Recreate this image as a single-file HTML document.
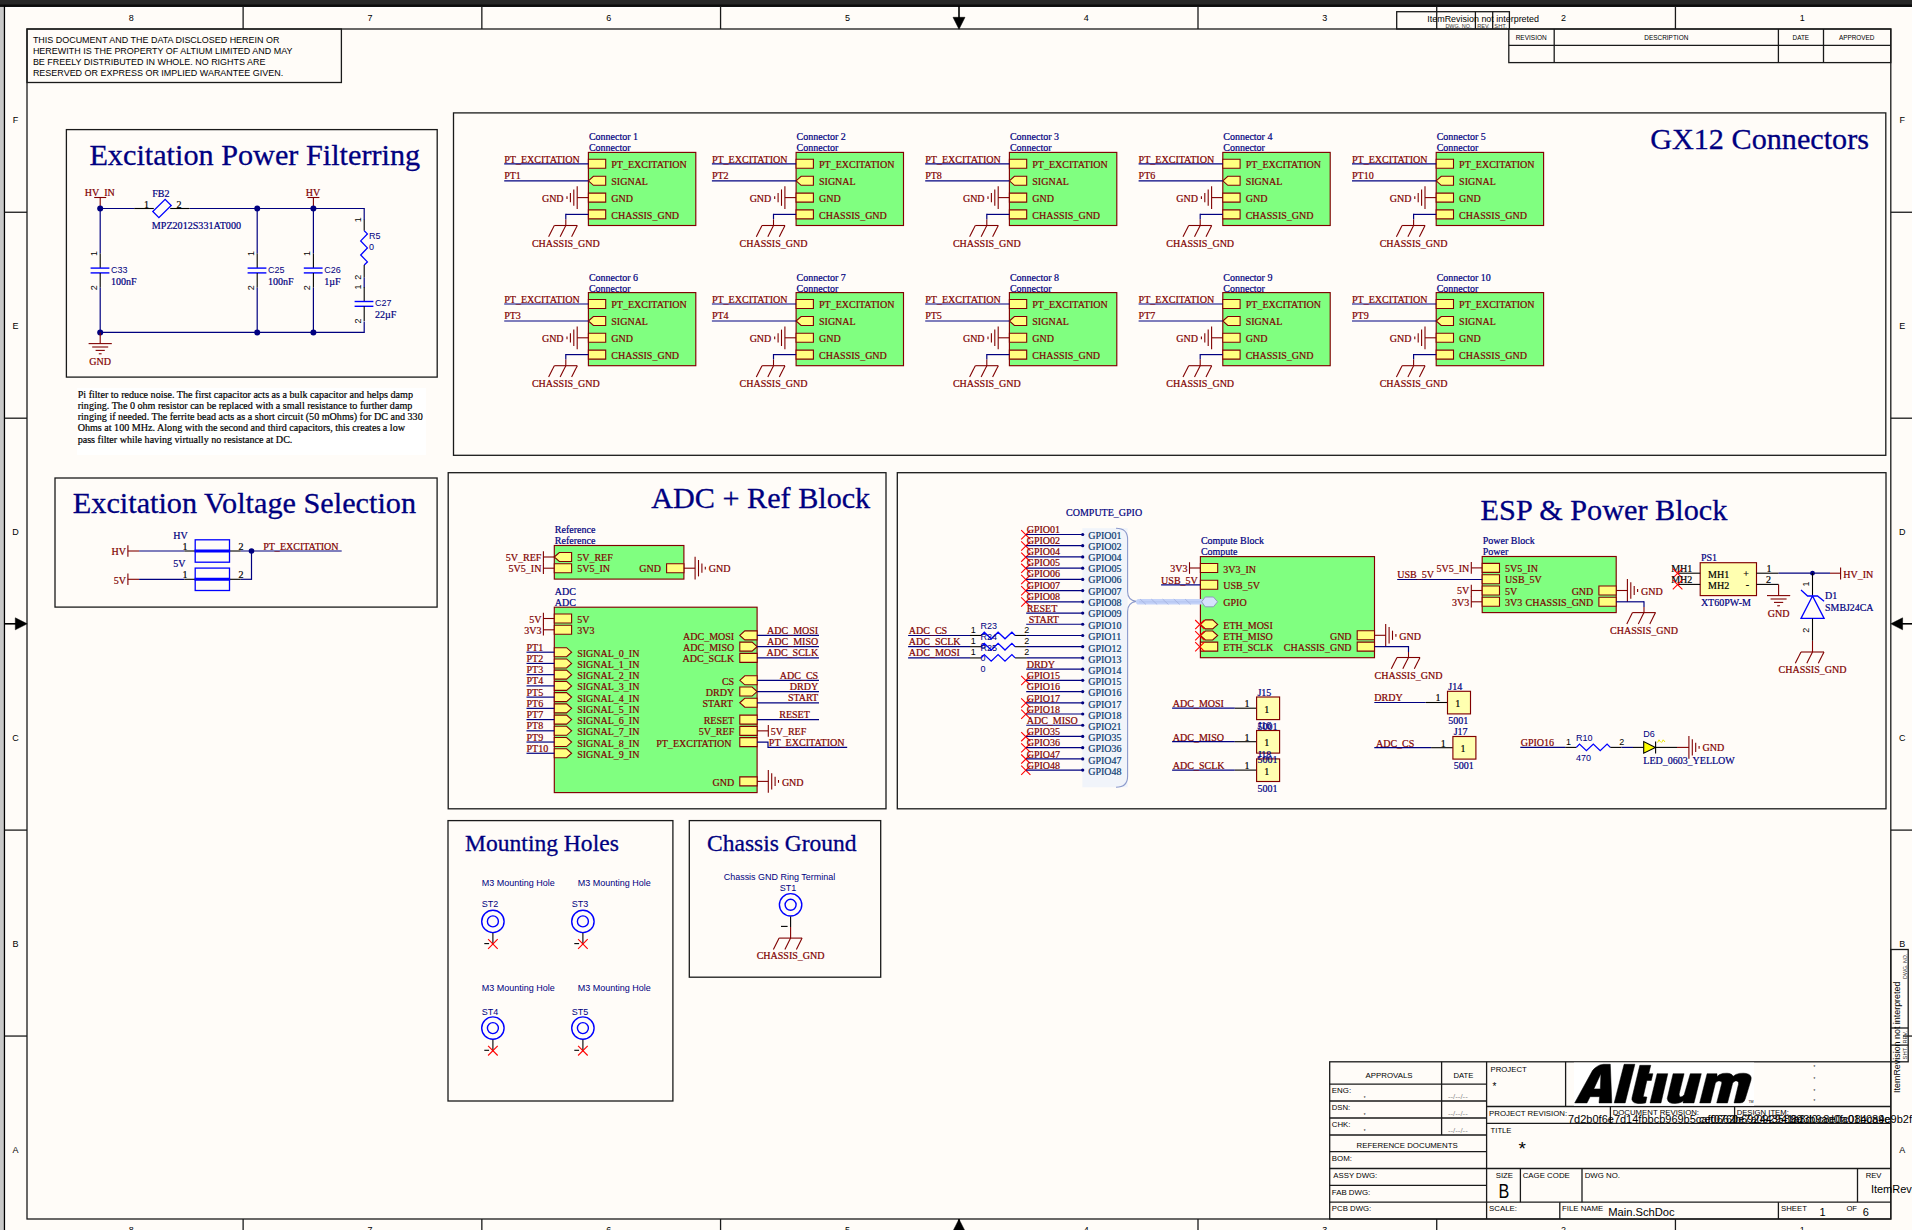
<!DOCTYPE html>
<html><head><meta charset="utf-8"><title>Main.SchDoc</title>
<style>
html,body{margin:0;padding:0;background:#FFFCF8;overflow:hidden}
svg{display:block;font-family:"Liberation Serif",serif}
text{white-space:pre}
</style></head><body>
<svg width="1912" height="1230" viewBox="0 0 1912 1230">
<rect x="0" y="0" width="1912" height="1230" fill="#FFFCF8"/>
<rect x="0" y="0" width="1912" height="6.7" fill="#282828"/>
<rect x="0" y="4.0" width="1912" height="2.7" fill="#191919"/>
<rect x="0" y="6.7" width="3.9" height="1224" fill="#c8c8c8"/>
<line x1="5.2" y1="7.4" x2="1912" y2="7.4" stroke="#ffffff" stroke-width="1"/>
<line x1="5.8" y1="7" x2="5.8" y2="1230" stroke="#ffffff" stroke-width="1"/>
<line x1="0" y1="6.15" x2="1912" y2="6.15" stroke="#000" stroke-width="1.3"/>
<line x1="4.45" y1="5.5" x2="4.45" y2="1230" stroke="#000" stroke-width="1.3"/>
<rect x="27" y="29" width="1863.8" height="1190" fill="none" stroke="#1a1a1a" stroke-width="1.3"/>
<line x1="243.12" y1="6" x2="243.12" y2="29" stroke="#1a1a1a" stroke-width="1.3"/>
<line x1="243.12" y1="1219" x2="243.12" y2="1230" stroke="#1a1a1a" stroke-width="1.3"/>
<line x1="481.84" y1="6" x2="481.84" y2="29" stroke="#1a1a1a" stroke-width="1.3"/>
<line x1="481.84" y1="1219" x2="481.84" y2="1230" stroke="#1a1a1a" stroke-width="1.3"/>
<line x1="720.56" y1="6" x2="720.56" y2="29" stroke="#1a1a1a" stroke-width="1.3"/>
<line x1="720.56" y1="1219" x2="720.56" y2="1230" stroke="#1a1a1a" stroke-width="1.3"/>
<line x1="1198" y1="6" x2="1198" y2="29" stroke="#1a1a1a" stroke-width="1.3"/>
<line x1="1198" y1="1219" x2="1198" y2="1230" stroke="#1a1a1a" stroke-width="1.3"/>
<line x1="1436.72" y1="6" x2="1436.72" y2="29" stroke="#1a1a1a" stroke-width="1.3"/>
<line x1="1436.72" y1="1219" x2="1436.72" y2="1230" stroke="#1a1a1a" stroke-width="1.3"/>
<line x1="1675.44" y1="6" x2="1675.44" y2="29" stroke="#1a1a1a" stroke-width="1.3"/>
<line x1="1675.44" y1="1219" x2="1675.44" y2="1230" stroke="#1a1a1a" stroke-width="1.3"/>
<text x="131.26" y="20.8" font-size="9" fill="#000000" font-family="Liberation Sans" text-anchor="middle">8</text>
<text x="131.26" y="1233.3" font-size="9" fill="#000000" font-family="Liberation Sans" text-anchor="middle">8</text>
<text x="369.98" y="20.8" font-size="9" fill="#000000" font-family="Liberation Sans" text-anchor="middle">7</text>
<text x="369.98" y="1233.3" font-size="9" fill="#000000" font-family="Liberation Sans" text-anchor="middle">7</text>
<text x="608.7" y="20.8" font-size="9" fill="#000000" font-family="Liberation Sans" text-anchor="middle">6</text>
<text x="608.7" y="1233.3" font-size="9" fill="#000000" font-family="Liberation Sans" text-anchor="middle">6</text>
<text x="847.42" y="20.8" font-size="9" fill="#000000" font-family="Liberation Sans" text-anchor="middle">5</text>
<text x="847.42" y="1233.3" font-size="9" fill="#000000" font-family="Liberation Sans" text-anchor="middle">5</text>
<text x="1086.14" y="20.8" font-size="9" fill="#000000" font-family="Liberation Sans" text-anchor="middle">4</text>
<text x="1086.14" y="1233.3" font-size="9" fill="#000000" font-family="Liberation Sans" text-anchor="middle">4</text>
<text x="1324.86" y="20.8" font-size="9" fill="#000000" font-family="Liberation Sans" text-anchor="middle">3</text>
<text x="1324.86" y="1233.3" font-size="9" fill="#000000" font-family="Liberation Sans" text-anchor="middle">3</text>
<text x="1563.58" y="20.8" font-size="9" fill="#000000" font-family="Liberation Sans" text-anchor="middle">2</text>
<text x="1563.58" y="1233.3" font-size="9" fill="#000000" font-family="Liberation Sans" text-anchor="middle">2</text>
<text x="1802.3" y="20.8" font-size="9" fill="#000000" font-family="Liberation Sans" text-anchor="middle">1</text>
<text x="1802.3" y="1233.3" font-size="9" fill="#000000" font-family="Liberation Sans" text-anchor="middle">1</text>
<line x1="4.6" y1="212.25" x2="27" y2="212.25" stroke="#1a1a1a" stroke-width="1.3"/>
<line x1="1890.8" y1="212.25" x2="1912" y2="212.25" stroke="#1a1a1a" stroke-width="1.3"/>
<line x1="4.6" y1="418.2" x2="27" y2="418.2" stroke="#1a1a1a" stroke-width="1.3"/>
<line x1="1890.8" y1="418.2" x2="1912" y2="418.2" stroke="#1a1a1a" stroke-width="1.3"/>
<line x1="4.6" y1="830.1" x2="27" y2="830.1" stroke="#1a1a1a" stroke-width="1.3"/>
<line x1="1890.8" y1="830.1" x2="1912" y2="830.1" stroke="#1a1a1a" stroke-width="1.3"/>
<line x1="4.6" y1="1036.05" x2="27" y2="1036.05" stroke="#1a1a1a" stroke-width="1.3"/>
<line x1="1903" y1="1036.05" x2="1912" y2="1036.05" stroke="#1a1a1a" stroke-width="1.3"/>
<text x="15.6" y="123.47" font-size="9" fill="#000000" font-family="Liberation Sans" text-anchor="middle">F</text>
<text x="1902.2" y="123.47" font-size="9" fill="#000000" font-family="Liberation Sans" text-anchor="middle">F</text>
<text x="15.6" y="329.42" font-size="9" fill="#000000" font-family="Liberation Sans" text-anchor="middle">E</text>
<text x="1902.2" y="329.42" font-size="9" fill="#000000" font-family="Liberation Sans" text-anchor="middle">E</text>
<text x="15.6" y="535.38" font-size="9" fill="#000000" font-family="Liberation Sans" text-anchor="middle">D</text>
<text x="1902.2" y="535.38" font-size="9" fill="#000000" font-family="Liberation Sans" text-anchor="middle">D</text>
<text x="15.6" y="741.32" font-size="9" fill="#000000" font-family="Liberation Sans" text-anchor="middle">C</text>
<text x="1902.2" y="741.32" font-size="9" fill="#000000" font-family="Liberation Sans" text-anchor="middle">C</text>
<text x="15.6" y="947.27" font-size="9" fill="#000000" font-family="Liberation Sans" text-anchor="middle">B</text>
<text x="1902.2" y="947.27" font-size="9" fill="#000000" font-family="Liberation Sans" text-anchor="middle">B</text>
<text x="15.6" y="1153.22" font-size="9" fill="#000000" font-family="Liberation Sans" text-anchor="middle">A</text>
<text x="1902.2" y="1153.22" font-size="9" fill="#000000" font-family="Liberation Sans" text-anchor="middle">A</text>
<line x1="959" y1="6" x2="959" y2="18" stroke="#000" stroke-width="1.6"/>
<polygon points="953,17.3 965,17.3 959,29.2" fill="#000" stroke="#000" stroke-width="0.5"/>
<line x1="959" y1="1219" x2="959" y2="1230" stroke="#000" stroke-width="1.6"/>
<polygon points="953,1231 965,1231 959,1219.2" fill="#000" stroke="#000" stroke-width="0.5"/>
<line x1="4.6" y1="623.8" x2="16" y2="623.8" stroke="#000" stroke-width="1.6"/>
<polygon points="15.3,617.8 15.3,629.8 27.2,623.8" fill="#000" stroke="#000" stroke-width="0.5"/>
<line x1="1902" y1="623.8" x2="1912" y2="623.8" stroke="#000" stroke-width="1.6"/>
<polygon points="1902.6,617.8 1902.6,629.8 1890.8,623.8" fill="#000" stroke="#000" stroke-width="0.5"/>
<rect x="27" y="29" width="314.4" height="53.5" fill="none" stroke="#1a1a1a" stroke-width="1.3"/>
<text x="32.9" y="43.4" font-size="9.5" fill="#000000" font-family="Liberation Sans" textLength="246.5" lengthAdjust="spacingAndGlyphs">THIS DOCUMENT AND THE DATA DISCLOSED HEREIN OR</text>
<text x="32.9" y="54.43" font-size="9.5" fill="#000000" font-family="Liberation Sans" textLength="259.6" lengthAdjust="spacingAndGlyphs">HEREWITH IS THE PROPERTY OF ALTIUM LIMITED AND MAY</text>
<text x="32.9" y="65.46" font-size="9.5" fill="#000000" font-family="Liberation Sans" textLength="232.5" lengthAdjust="spacingAndGlyphs">BE FREELY DISTRIBUTED IN WHOLE. NO RIGHTS ARE</text>
<text x="32.9" y="76.49" font-size="9.5" fill="#000000" font-family="Liberation Sans" textLength="250.3" lengthAdjust="spacingAndGlyphs">RESERVED OR EXPRESS OR IMPLIED WARANTEE GIVEN.</text>
<rect x="1508.8" y="29" width="382" height="33.6" fill="none" stroke="#1a1a1a" stroke-width="1.3"/>
<line x1="1508.8" y1="45.4" x2="1890.8" y2="45.4" stroke="#1a1a1a" stroke-width="1.3"/>
<line x1="1554.2" y1="29" x2="1554.2" y2="62.6" stroke="#1a1a1a" stroke-width="1.3"/>
<line x1="1778.4" y1="29" x2="1778.4" y2="62.6" stroke="#1a1a1a" stroke-width="1.3"/>
<line x1="1823.5" y1="29" x2="1823.5" y2="62.6" stroke="#1a1a1a" stroke-width="1.3"/>
<text x="1531.2" y="39.9" font-size="7.9" fill="#000000" font-family="Liberation Sans" text-anchor="middle" textLength="31" lengthAdjust="spacingAndGlyphs">REVISION</text>
<text x="1666.3" y="39.9" font-size="7.9" fill="#000000" font-family="Liberation Sans" text-anchor="middle" textLength="44" lengthAdjust="spacingAndGlyphs">DESCRIPTION</text>
<text x="1800.8" y="39.9" font-size="7.9" fill="#000000" font-family="Liberation Sans" text-anchor="middle" textLength="16.5" lengthAdjust="spacingAndGlyphs">DATE</text>
<text x="1856.7" y="39.9" font-size="7.9" fill="#000000" font-family="Liberation Sans" text-anchor="middle" textLength="35.5" lengthAdjust="spacingAndGlyphs">APPROVED</text>
<rect x="1396.7" y="11.7" width="112.7" height="17.3" fill="none" stroke="#1a1a1a" stroke-width="1.3"/>
<line x1="1475.4" y1="11.7" x2="1475.4" y2="29" stroke="#1a1a1a" stroke-width="1.3"/>
<line x1="1492.7" y1="11.7" x2="1492.7" y2="29" stroke="#1a1a1a" stroke-width="1.3"/>
<text x="1427.3" y="21.9" font-size="9.4" fill="#000000" font-family="Liberation Sans" textLength="111.7" lengthAdjust="spacingAndGlyphs">ItemRevision not interpreted</text>
<text x="1445.4" y="27.6" font-size="4.6" fill="#333" font-family="Liberation Sans" textLength="26.2" lengthAdjust="spacingAndGlyphs">DWG. NO.</text>
<text x="1477.2" y="27.6" font-size="4.6" fill="#333" font-family="Liberation Sans" textLength="12.5" lengthAdjust="spacingAndGlyphs">REV.</text>
<text x="1494.3" y="27.6" font-size="4.6" fill="#333" font-family="Liberation Sans" textLength="12.5" lengthAdjust="spacingAndGlyphs">SHT.</text>
<rect x="1890.8" y="949.5" width="17.4" height="112.3" fill="none" stroke="#1a1a1a" stroke-width="1.3"/>
<line x1="1890.8" y1="1028" x2="1908.2" y2="1028" stroke="#1a1a1a" stroke-width="1.3"/>
<line x1="1890.8" y1="1045.1" x2="1908.2" y2="1045.1" stroke="#1a1a1a" stroke-width="1.3"/>
<text x="1900.4" y="1092.9" font-size="9.4" fill="#000000" font-family="Liberation Sans" textLength="111.3" lengthAdjust="spacingAndGlyphs" transform="rotate(-90 1900.4 1092.9)">ItemRevision not interpreted</text>
<text x="1906.6" y="978.9" font-size="4.6" fill="#333" font-family="Liberation Sans" textLength="25.2" lengthAdjust="spacingAndGlyphs" transform="rotate(-90 1906.6 978.9)">DWG. NO.</text>
<text x="1906.6" y="1043.4" font-size="4.6" fill="#333" font-family="Liberation Sans" textLength="12.5" lengthAdjust="spacingAndGlyphs" transform="rotate(-90 1906.6 1043.4)">REV.</text>
<text x="1906.6" y="1059.4" font-size="4.6" fill="#333" font-family="Liberation Sans" textLength="12.5" lengthAdjust="spacingAndGlyphs" transform="rotate(-90 1906.6 1059.4)">SHT.</text>
<rect x="66.4" y="129.6" width="370.8" height="247.5" fill="none" stroke="#1a1a1a" stroke-width="1.3"/>
<text x="89.4" y="165.3" font-size="30.2" fill="#000080" textLength="330.8" lengthAdjust="spacingAndGlyphs" stroke="#000080" stroke-width="0.3">Excitation Power Filterring</text>
<line x1="100.2" y1="208.5" x2="134.2" y2="208.5" stroke="#000080" stroke-width="1.2"/>
<line x1="189.6" y1="208.5" x2="364.2" y2="208.5" stroke="#000080" stroke-width="1.2"/>
<line x1="364.2" y1="207.9" x2="364.2" y2="220" stroke="#000080" stroke-width="1.2"/>
<line x1="100.2" y1="208.5" x2="100.2" y2="253.5" stroke="#000080" stroke-width="1.2"/>
<line x1="100.2" y1="287.6" x2="100.2" y2="332.4" stroke="#000080" stroke-width="1.2"/>
<line x1="257.2" y1="208.5" x2="257.2" y2="253.5" stroke="#000080" stroke-width="1.2"/>
<line x1="257.2" y1="287.6" x2="257.2" y2="332.4" stroke="#000080" stroke-width="1.2"/>
<line x1="313.4" y1="208.5" x2="313.4" y2="253.5" stroke="#000080" stroke-width="1.2"/>
<line x1="313.4" y1="287.6" x2="313.4" y2="332.4" stroke="#000080" stroke-width="1.2"/>
<line x1="100.2" y1="332.4" x2="364.2" y2="332.4" stroke="#000080" stroke-width="1.2"/>
<line x1="364.2" y1="321.6" x2="364.2" y2="333" stroke="#000080" stroke-width="1.2"/>
<line x1="364.2" y1="277.4" x2="364.2" y2="287.6" stroke="#000080" stroke-width="1.2"/>
<line x1="100.2" y1="208.5" x2="100.2" y2="197.5" stroke="#800000" stroke-width="1.1"/>
<line x1="94.2" y1="197.5" x2="106.2" y2="197.5" stroke="#800000" stroke-width="1.1"/>
<text x="99.8" y="196.1" font-size="10" fill="#800000" text-anchor="middle" stroke="#800000" stroke-width="0.2">HV_IN</text>
<line x1="313.4" y1="208.5" x2="313.4" y2="197.5" stroke="#800000" stroke-width="1.1"/>
<line x1="307.4" y1="197.5" x2="319.4" y2="197.5" stroke="#800000" stroke-width="1.1"/>
<text x="313" y="196.1" font-size="10" fill="#800000" text-anchor="middle" stroke="#800000" stroke-width="0.2">HV</text>
<circle cx="100.2" cy="208.5" r="3" fill="#000080" stroke="none" stroke-width="0"/>
<circle cx="100.2" cy="332.4" r="3" fill="#000080" stroke="none" stroke-width="0"/>
<circle cx="257.2" cy="208.5" r="3" fill="#000080" stroke="none" stroke-width="0"/>
<circle cx="257.2" cy="332.4" r="3" fill="#000080" stroke="none" stroke-width="0"/>
<circle cx="313.4" cy="208.5" r="3" fill="#000080" stroke="none" stroke-width="0"/>
<circle cx="313.4" cy="332.4" r="3" fill="#000080" stroke="none" stroke-width="0"/>
<line x1="134.2" y1="208.5" x2="153.8" y2="208.5" stroke="#000000" stroke-width="1.1"/>
<line x1="170.2" y1="208.5" x2="189.6" y2="208.5" stroke="#000000" stroke-width="1.1"/>
<rect x="153.3" y="204.2" width="17.4" height="8.6" fill="none" stroke="#0000FF" stroke-width="1.3" transform="rotate(-45 162 208.5)"/>
<text x="144" y="207.6" font-size="10" fill="#000000" stroke="#000000" stroke-width="0.2">1</text>
<text x="176.6" y="207.6" font-size="10" fill="#000000" stroke="#000000" stroke-width="0.2">2</text>
<text x="152.2" y="196.8" font-size="10" fill="#000080" stroke="#000080" stroke-width="0.2">FB2</text>
<text x="151.8" y="228.7" font-size="10" fill="#000080" textLength="89.2" lengthAdjust="spacingAndGlyphs" stroke="#000080" stroke-width="0.2">MPZ2012S331AT000</text>
<line x1="100.2" y1="253.5" x2="100.2" y2="268.1" stroke="#000000" stroke-width="1.1"/>
<line x1="90.6" y1="268.1" x2="109.4" y2="268.1" stroke="#0000FF" stroke-width="1.4"/>
<line x1="90.6" y1="272.9" x2="109.4" y2="272.9" stroke="#0000FF" stroke-width="1.4"/>
<line x1="100.2" y1="272.9" x2="100.2" y2="287.6" stroke="#000000" stroke-width="1.1"/>
<text x="97" y="256" font-size="9" fill="#000000" font-family="Liberation Sans" transform="rotate(-90 97 256)">1</text>
<text x="97" y="290.2" font-size="9" fill="#000000" font-family="Liberation Sans" transform="rotate(-90 97 290.2)">2</text>
<text x="111" y="272.8" font-size="9" fill="#000080" font-family="Liberation Sans">C33</text>
<text x="111" y="284.7" font-size="10" fill="#000080" stroke="#000080" stroke-width="0.2">100nF</text>
<line x1="257.2" y1="253.5" x2="257.2" y2="268.1" stroke="#000000" stroke-width="1.1"/>
<line x1="247.6" y1="268.1" x2="266.4" y2="268.1" stroke="#0000FF" stroke-width="1.4"/>
<line x1="247.6" y1="272.9" x2="266.4" y2="272.9" stroke="#0000FF" stroke-width="1.4"/>
<line x1="257.2" y1="272.9" x2="257.2" y2="287.6" stroke="#000000" stroke-width="1.1"/>
<text x="254" y="256" font-size="9" fill="#000000" font-family="Liberation Sans" transform="rotate(-90 254 256)">1</text>
<text x="254" y="290.2" font-size="9" fill="#000000" font-family="Liberation Sans" transform="rotate(-90 254 290.2)">2</text>
<text x="268" y="272.8" font-size="9" fill="#000080" font-family="Liberation Sans">C25</text>
<text x="268" y="284.7" font-size="10" fill="#000080" stroke="#000080" stroke-width="0.2">100nF</text>
<line x1="313.4" y1="253.5" x2="313.4" y2="268.1" stroke="#000000" stroke-width="1.1"/>
<line x1="303.8" y1="268.1" x2="322.6" y2="268.1" stroke="#0000FF" stroke-width="1.4"/>
<line x1="303.8" y1="272.9" x2="322.6" y2="272.9" stroke="#0000FF" stroke-width="1.4"/>
<line x1="313.4" y1="272.9" x2="313.4" y2="287.6" stroke="#000000" stroke-width="1.1"/>
<text x="310.2" y="256" font-size="9" fill="#000000" font-family="Liberation Sans" transform="rotate(-90 310.2 256)">1</text>
<text x="310.2" y="290.2" font-size="9" fill="#000000" font-family="Liberation Sans" transform="rotate(-90 310.2 290.2)">2</text>
<text x="324.2" y="272.8" font-size="9" fill="#000080" font-family="Liberation Sans">C26</text>
<text x="324.2" y="284.7" font-size="10" fill="#000080" stroke="#000080" stroke-width="0.2">1µF</text>
<line x1="364.2" y1="286.9" x2="364.2" y2="301.5" stroke="#000000" stroke-width="1.1"/>
<line x1="354.6" y1="301.5" x2="373.4" y2="301.5" stroke="#0000FF" stroke-width="1.4"/>
<line x1="354.6" y1="306.3" x2="373.4" y2="306.3" stroke="#0000FF" stroke-width="1.4"/>
<line x1="364.2" y1="306.3" x2="364.2" y2="321" stroke="#000000" stroke-width="1.1"/>
<text x="361" y="289.4" font-size="9" fill="#000000" font-family="Liberation Sans" transform="rotate(-90 361 289.4)">1</text>
<text x="361" y="323.6" font-size="9" fill="#000000" font-family="Liberation Sans" transform="rotate(-90 361 323.6)">2</text>
<text x="375" y="306.2" font-size="9" fill="#000080" font-family="Liberation Sans">C27</text>
<text x="375" y="318.1" font-size="10" fill="#000080" stroke="#000080" stroke-width="0.2">22µF</text>
<line x1="364.2" y1="219.8" x2="364.2" y2="230.8" stroke="#000000" stroke-width="1.1"/>
<polyline points="364.2,230.8 367.4,233.9 360.7,240.9 367.4,247.9 360.7,255 367.4,261.9 364.2,265" fill="none" stroke="#0000FF" stroke-width="1.3" stroke-linejoin="miter"/>
<line x1="364.2" y1="265" x2="364.2" y2="277.5" stroke="#000000" stroke-width="1.1"/>
<text x="361" y="222.3" font-size="9" fill="#000000" font-family="Liberation Sans" transform="rotate(-90 361 222.3)">1</text>
<text x="361" y="279.8" font-size="9" fill="#000000" font-family="Liberation Sans" transform="rotate(-90 361 279.8)">2</text>
<text x="369.1" y="238.6" font-size="9" fill="#000080" font-family="Liberation Sans">R5</text>
<text x="369.1" y="250.2" font-size="9" fill="#000080" font-family="Liberation Sans">0</text>
<line x1="100.2" y1="332.4" x2="100.2" y2="343.6" stroke="#800000" stroke-width="1.1"/>
<line x1="88.6" y1="343.6" x2="111.8" y2="343.6" stroke="#800000" stroke-width="1.1"/>
<line x1="92.2" y1="347" x2="108.2" y2="347" stroke="#800000" stroke-width="1.1"/>
<line x1="95.6" y1="350.4" x2="104.8" y2="350.4" stroke="#800000" stroke-width="1.1"/>
<line x1="98.8" y1="353.8" x2="101.6" y2="353.8" stroke="#800000" stroke-width="1.1"/>
<text x="100.2" y="364.8" font-size="10" fill="#800000" text-anchor="middle" stroke="#800000" stroke-width="0.2">GND</text>
<rect x="76.9" y="387.9" width="349" height="67.2" fill="#ffffff"/>
<text x="77.7" y="397.9" font-size="10.1" fill="#000000" textLength="335.3" lengthAdjust="spacingAndGlyphs" stroke="#000000" stroke-width="0.2">Pi filter to reduce noise. The first capacitor acts as a bulk capacitor and helps damp</text>
<text x="77.7" y="409.05" font-size="10.1" fill="#000000" textLength="334.6" lengthAdjust="spacingAndGlyphs" stroke="#000000" stroke-width="0.2">ringing. The 0 ohm resistor can be replaced with a small resistance to further damp</text>
<text x="77.7" y="420.2" font-size="10.1" fill="#000000" textLength="345" lengthAdjust="spacingAndGlyphs" stroke="#000000" stroke-width="0.2">ringing if needed. The ferrite bead acts as a short circuit (50 mOhms) for DC and 330</text>
<text x="77.7" y="431.35" font-size="10.1" fill="#000000" textLength="327.3" lengthAdjust="spacingAndGlyphs" stroke="#000000" stroke-width="0.2">Ohms at 100 MHz. Along with the second and third capacitors, this creates a low</text>
<text x="77.7" y="442.5" font-size="10.1" fill="#000000" textLength="214.7" lengthAdjust="spacingAndGlyphs" stroke="#000000" stroke-width="0.2">pass filter while having virtually no resistance at DC.</text>
<rect x="55" y="478" width="382.1" height="129.1" fill="none" stroke="#1a1a1a" stroke-width="1.3"/>
<text x="72.8" y="513.4" font-size="30.2" fill="#000080" textLength="343.3" lengthAdjust="spacingAndGlyphs" stroke="#000080" stroke-width="0.3">Excitation Voltage Selection</text>
<line x1="127.9" y1="545.3" x2="127.9" y2="556.7" stroke="#800000" stroke-width="1.1"/>
<line x1="127.9" y1="551" x2="139.1" y2="551" stroke="#800000" stroke-width="1.1"/>
<text x="125.9" y="555.3" font-size="10" fill="#800000" text-anchor="end" stroke="#800000" stroke-width="0.2">HV</text>
<line x1="139.1" y1="551" x2="184.4" y2="551" stroke="#000080" stroke-width="1.2"/>
<line x1="184.4" y1="551" x2="195.2" y2="551" stroke="#000000" stroke-width="1.1"/>
<line x1="229.5" y1="551" x2="240.7" y2="551" stroke="#000000" stroke-width="1.1"/>
<rect x="195.2" y="539.8" width="34.3" height="22.4" fill="none" stroke="#0000FF" stroke-width="1.3"/>
<line x1="194.6" y1="551" x2="230.1" y2="551" stroke="#0000FF" stroke-width="3"/>
<text x="182.6" y="550" font-size="10" fill="#000000" stroke="#000000" stroke-width="0.2">1</text>
<text x="238.4" y="550" font-size="10" fill="#000000" stroke="#000000" stroke-width="0.2">2</text>
<text x="173.2" y="538.7" font-size="10" fill="#000080" stroke="#000080" stroke-width="0.2">HV</text>
<line x1="127.9" y1="573.6" x2="127.9" y2="585" stroke="#800000" stroke-width="1.1"/>
<line x1="127.9" y1="579.3" x2="139.1" y2="579.3" stroke="#800000" stroke-width="1.1"/>
<text x="125.9" y="583.6" font-size="10" fill="#800000" text-anchor="end" stroke="#800000" stroke-width="0.2">5V</text>
<line x1="139.1" y1="579.3" x2="184.4" y2="579.3" stroke="#000080" stroke-width="1.2"/>
<line x1="184.4" y1="579.3" x2="195.2" y2="579.3" stroke="#000000" stroke-width="1.1"/>
<line x1="229.5" y1="579.3" x2="240.7" y2="579.3" stroke="#000000" stroke-width="1.1"/>
<rect x="195.2" y="568.1" width="34.3" height="22.4" fill="none" stroke="#0000FF" stroke-width="1.3"/>
<line x1="194.6" y1="579.3" x2="230.1" y2="579.3" stroke="#0000FF" stroke-width="3"/>
<text x="182.6" y="578.3" font-size="10" fill="#000000" stroke="#000000" stroke-width="0.2">1</text>
<text x="238.4" y="578.3" font-size="10" fill="#000000" stroke="#000000" stroke-width="0.2">2</text>
<text x="173.2" y="567" font-size="10" fill="#000080" stroke="#000080" stroke-width="0.2">5V</text>
<line x1="240.7" y1="551" x2="341.7" y2="551" stroke="#000080" stroke-width="1.2"/>
<line x1="240.7" y1="579.3" x2="251.5" y2="579.3" stroke="#000080" stroke-width="1.2"/>
<line x1="251.5" y1="551" x2="251.5" y2="579.9" stroke="#000080" stroke-width="1.2"/>
<circle cx="251.5" cy="551" r="2.8" fill="#000080" stroke="none" stroke-width="0"/>
<text x="263.2" y="549.6" font-size="10" fill="#800000" textLength="75.4" lengthAdjust="spacingAndGlyphs" stroke="#800000" stroke-width="0.2">PT_EXCITATION</text>
<rect x="453.5" y="112.9" width="1432.3" height="342.4" fill="none" stroke="#1a1a1a" stroke-width="1.3"/>
<text x="1650.2" y="149.1" font-size="30.2" fill="#000080" textLength="218.8" lengthAdjust="spacingAndGlyphs" stroke="#000080" stroke-width="0.3">GX12 Connectors</text>
<rect x="588.4" y="152.4" width="107.4" height="73.1" fill="#80FF80" stroke="#800000" stroke-width="1.15"/>
<text x="588.9" y="139.7" font-size="10" fill="#000080" stroke="#000080" stroke-width="0.2">Connector 1</text>
<text x="588.9" y="150.7" font-size="10" fill="#000080" stroke="#000080" stroke-width="0.2">Connector</text>
<polygon points="588.4,159.3 605.7,159.3 605.7,168.3 588.4,168.3" fill="#FFFF80" stroke="#800000" stroke-width="1.1" stroke-linejoin="miter"/>
<text x="611.3" y="168" font-size="10" fill="#800000" textLength="75.4" lengthAdjust="spacingAndGlyphs" stroke="#800000" stroke-width="0.2">PT_EXCITATION</text>
<polygon points="588.4,180.8 593.4,176.3 605.7,176.3 605.7,185.3 593.4,185.3" fill="#FFFF80" stroke="#800000" stroke-width="1.1" stroke-linejoin="miter"/>
<text x="611.3" y="185" font-size="10" fill="#800000" stroke="#800000" stroke-width="0.2">SIGNAL</text>
<polygon points="588.4,193.1 605.7,193.1 605.7,202.1 588.4,202.1" fill="#FFFF80" stroke="#800000" stroke-width="1.1" stroke-linejoin="miter"/>
<text x="611.3" y="201.8" font-size="10" fill="#800000" stroke="#800000" stroke-width="0.2">GND</text>
<polygon points="588.4,209.9 605.7,209.9 605.7,218.9 588.4,218.9" fill="#FFFF80" stroke="#800000" stroke-width="1.1" stroke-linejoin="miter"/>
<text x="611.3" y="218.6" font-size="10" fill="#800000" stroke="#800000" stroke-width="0.2">CHASSIS_GND</text>
<line x1="504.2" y1="163.8" x2="588.4" y2="163.8" stroke="#000080" stroke-width="1.2"/>
<text x="504.2" y="162.8" font-size="10" fill="#800000" textLength="75.6" lengthAdjust="spacingAndGlyphs" stroke="#800000" stroke-width="0.2">PT_EXCITATION</text>
<line x1="504.2" y1="180.8" x2="588.4" y2="180.8" stroke="#000080" stroke-width="1.2"/>
<text x="504.2" y="178.8" font-size="10" fill="#800000" stroke="#800000" stroke-width="0.2">PT1</text>
<line x1="588.4" y1="197.6" x2="577.2" y2="197.6" stroke="#800000" stroke-width="1.1"/>
<line x1="577.2" y1="186.2" x2="577.2" y2="209" stroke="#800000" stroke-width="1.1"/>
<line x1="573.8" y1="189.4" x2="573.8" y2="205.8" stroke="#800000" stroke-width="1.1"/>
<line x1="570.4" y1="193" x2="570.4" y2="202.2" stroke="#800000" stroke-width="1.1"/>
<line x1="567" y1="196.2" x2="567" y2="199" stroke="#800000" stroke-width="1.1"/>
<text x="563.6" y="201.6" font-size="10" fill="#800000" text-anchor="end" stroke="#800000" stroke-width="0.2">GND</text>
<line x1="565.8" y1="214.4" x2="588.4" y2="214.4" stroke="#000080" stroke-width="1.2"/>
<line x1="565.8" y1="213.8" x2="565.8" y2="219.4" stroke="#000080" stroke-width="1.2"/>
<line x1="565.8" y1="219.4" x2="565.8" y2="225.5" stroke="#800000" stroke-width="1.1"/>
<line x1="554.3" y1="225.5" x2="577.3" y2="225.5" stroke="#800000" stroke-width="1.1"/>
<line x1="554.3" y1="225.5" x2="548.6" y2="236.8" stroke="#800000" stroke-width="1.1"/>
<line x1="565.8" y1="225.5" x2="560.1" y2="236.8" stroke="#800000" stroke-width="1.1"/>
<line x1="577.3" y1="225.5" x2="571.6" y2="236.8" stroke="#800000" stroke-width="1.1"/>
<text x="565.8" y="246.7" font-size="10" fill="#800000" text-anchor="middle" stroke="#800000" stroke-width="0.2">CHASSIS_GND</text>
<rect x="588.4" y="292.6" width="107.4" height="73.1" fill="#80FF80" stroke="#800000" stroke-width="1.15"/>
<text x="588.9" y="280.8" font-size="10" fill="#000080" stroke="#000080" stroke-width="0.2">Connector 6</text>
<text x="588.9" y="291.8" font-size="10" fill="#000080" stroke="#000080" stroke-width="0.2">Connector</text>
<polygon points="588.4,299.5 605.7,299.5 605.7,308.5 588.4,308.5" fill="#FFFF80" stroke="#800000" stroke-width="1.1" stroke-linejoin="miter"/>
<text x="611.3" y="308.2" font-size="10" fill="#800000" textLength="75.4" lengthAdjust="spacingAndGlyphs" stroke="#800000" stroke-width="0.2">PT_EXCITATION</text>
<polygon points="588.4,321 593.4,316.5 605.7,316.5 605.7,325.5 593.4,325.5" fill="#FFFF80" stroke="#800000" stroke-width="1.1" stroke-linejoin="miter"/>
<text x="611.3" y="325.2" font-size="10" fill="#800000" stroke="#800000" stroke-width="0.2">SIGNAL</text>
<polygon points="588.4,333.3 605.7,333.3 605.7,342.3 588.4,342.3" fill="#FFFF80" stroke="#800000" stroke-width="1.1" stroke-linejoin="miter"/>
<text x="611.3" y="342" font-size="10" fill="#800000" stroke="#800000" stroke-width="0.2">GND</text>
<polygon points="588.4,350.1 605.7,350.1 605.7,359.1 588.4,359.1" fill="#FFFF80" stroke="#800000" stroke-width="1.1" stroke-linejoin="miter"/>
<text x="611.3" y="358.8" font-size="10" fill="#800000" stroke="#800000" stroke-width="0.2">CHASSIS_GND</text>
<line x1="504.2" y1="304" x2="588.4" y2="304" stroke="#000080" stroke-width="1.2"/>
<text x="504.2" y="303" font-size="10" fill="#800000" textLength="75.6" lengthAdjust="spacingAndGlyphs" stroke="#800000" stroke-width="0.2">PT_EXCITATION</text>
<line x1="504.2" y1="321" x2="588.4" y2="321" stroke="#000080" stroke-width="1.2"/>
<text x="504.2" y="319" font-size="10" fill="#800000" stroke="#800000" stroke-width="0.2">PT3</text>
<line x1="588.4" y1="337.8" x2="577.2" y2="337.8" stroke="#800000" stroke-width="1.1"/>
<line x1="577.2" y1="326.4" x2="577.2" y2="349.2" stroke="#800000" stroke-width="1.1"/>
<line x1="573.8" y1="329.6" x2="573.8" y2="346" stroke="#800000" stroke-width="1.1"/>
<line x1="570.4" y1="333.2" x2="570.4" y2="342.4" stroke="#800000" stroke-width="1.1"/>
<line x1="567" y1="336.4" x2="567" y2="339.2" stroke="#800000" stroke-width="1.1"/>
<text x="563.6" y="341.8" font-size="10" fill="#800000" text-anchor="end" stroke="#800000" stroke-width="0.2">GND</text>
<line x1="565.8" y1="354.6" x2="588.4" y2="354.6" stroke="#000080" stroke-width="1.2"/>
<line x1="565.8" y1="354" x2="565.8" y2="359.6" stroke="#000080" stroke-width="1.2"/>
<line x1="565.8" y1="359.6" x2="565.8" y2="365.7" stroke="#800000" stroke-width="1.1"/>
<line x1="554.3" y1="365.7" x2="577.3" y2="365.7" stroke="#800000" stroke-width="1.1"/>
<line x1="554.3" y1="365.7" x2="548.6" y2="377" stroke="#800000" stroke-width="1.1"/>
<line x1="565.8" y1="365.7" x2="560.1" y2="377" stroke="#800000" stroke-width="1.1"/>
<line x1="577.3" y1="365.7" x2="571.6" y2="377" stroke="#800000" stroke-width="1.1"/>
<text x="565.8" y="386.9" font-size="10" fill="#800000" text-anchor="middle" stroke="#800000" stroke-width="0.2">CHASSIS_GND</text>
<rect x="796.1" y="152.4" width="107.4" height="73.1" fill="#80FF80" stroke="#800000" stroke-width="1.15"/>
<text x="796.6" y="139.7" font-size="10" fill="#000080" stroke="#000080" stroke-width="0.2">Connector 2</text>
<text x="796.6" y="150.7" font-size="10" fill="#000080" stroke="#000080" stroke-width="0.2">Connector</text>
<polygon points="796.1,159.3 813.4,159.3 813.4,168.3 796.1,168.3" fill="#FFFF80" stroke="#800000" stroke-width="1.1" stroke-linejoin="miter"/>
<text x="819" y="168" font-size="10" fill="#800000" textLength="75.4" lengthAdjust="spacingAndGlyphs" stroke="#800000" stroke-width="0.2">PT_EXCITATION</text>
<polygon points="796.1,180.8 801.1,176.3 813.4,176.3 813.4,185.3 801.1,185.3" fill="#FFFF80" stroke="#800000" stroke-width="1.1" stroke-linejoin="miter"/>
<text x="819" y="185" font-size="10" fill="#800000" stroke="#800000" stroke-width="0.2">SIGNAL</text>
<polygon points="796.1,193.1 813.4,193.1 813.4,202.1 796.1,202.1" fill="#FFFF80" stroke="#800000" stroke-width="1.1" stroke-linejoin="miter"/>
<text x="819" y="201.8" font-size="10" fill="#800000" stroke="#800000" stroke-width="0.2">GND</text>
<polygon points="796.1,209.9 813.4,209.9 813.4,218.9 796.1,218.9" fill="#FFFF80" stroke="#800000" stroke-width="1.1" stroke-linejoin="miter"/>
<text x="819" y="218.6" font-size="10" fill="#800000" stroke="#800000" stroke-width="0.2">CHASSIS_GND</text>
<line x1="711.9" y1="163.8" x2="796.1" y2="163.8" stroke="#000080" stroke-width="1.2"/>
<text x="711.9" y="162.8" font-size="10" fill="#800000" textLength="75.6" lengthAdjust="spacingAndGlyphs" stroke="#800000" stroke-width="0.2">PT_EXCITATION</text>
<line x1="711.9" y1="180.8" x2="796.1" y2="180.8" stroke="#000080" stroke-width="1.2"/>
<text x="711.9" y="178.8" font-size="10" fill="#800000" stroke="#800000" stroke-width="0.2">PT2</text>
<line x1="796.1" y1="197.6" x2="784.9" y2="197.6" stroke="#800000" stroke-width="1.1"/>
<line x1="784.9" y1="186.2" x2="784.9" y2="209" stroke="#800000" stroke-width="1.1"/>
<line x1="781.5" y1="189.4" x2="781.5" y2="205.8" stroke="#800000" stroke-width="1.1"/>
<line x1="778.1" y1="193" x2="778.1" y2="202.2" stroke="#800000" stroke-width="1.1"/>
<line x1="774.7" y1="196.2" x2="774.7" y2="199" stroke="#800000" stroke-width="1.1"/>
<text x="771.3" y="201.6" font-size="10" fill="#800000" text-anchor="end" stroke="#800000" stroke-width="0.2">GND</text>
<line x1="773.5" y1="214.4" x2="796.1" y2="214.4" stroke="#000080" stroke-width="1.2"/>
<line x1="773.5" y1="213.8" x2="773.5" y2="219.4" stroke="#000080" stroke-width="1.2"/>
<line x1="773.5" y1="219.4" x2="773.5" y2="225.5" stroke="#800000" stroke-width="1.1"/>
<line x1="762" y1="225.5" x2="785" y2="225.5" stroke="#800000" stroke-width="1.1"/>
<line x1="762" y1="225.5" x2="756.3" y2="236.8" stroke="#800000" stroke-width="1.1"/>
<line x1="773.5" y1="225.5" x2="767.8" y2="236.8" stroke="#800000" stroke-width="1.1"/>
<line x1="785" y1="225.5" x2="779.3" y2="236.8" stroke="#800000" stroke-width="1.1"/>
<text x="773.5" y="246.7" font-size="10" fill="#800000" text-anchor="middle" stroke="#800000" stroke-width="0.2">CHASSIS_GND</text>
<rect x="796.1" y="292.6" width="107.4" height="73.1" fill="#80FF80" stroke="#800000" stroke-width="1.15"/>
<text x="796.6" y="280.8" font-size="10" fill="#000080" stroke="#000080" stroke-width="0.2">Connector 7</text>
<text x="796.6" y="291.8" font-size="10" fill="#000080" stroke="#000080" stroke-width="0.2">Connector</text>
<polygon points="796.1,299.5 813.4,299.5 813.4,308.5 796.1,308.5" fill="#FFFF80" stroke="#800000" stroke-width="1.1" stroke-linejoin="miter"/>
<text x="819" y="308.2" font-size="10" fill="#800000" textLength="75.4" lengthAdjust="spacingAndGlyphs" stroke="#800000" stroke-width="0.2">PT_EXCITATION</text>
<polygon points="796.1,321 801.1,316.5 813.4,316.5 813.4,325.5 801.1,325.5" fill="#FFFF80" stroke="#800000" stroke-width="1.1" stroke-linejoin="miter"/>
<text x="819" y="325.2" font-size="10" fill="#800000" stroke="#800000" stroke-width="0.2">SIGNAL</text>
<polygon points="796.1,333.3 813.4,333.3 813.4,342.3 796.1,342.3" fill="#FFFF80" stroke="#800000" stroke-width="1.1" stroke-linejoin="miter"/>
<text x="819" y="342" font-size="10" fill="#800000" stroke="#800000" stroke-width="0.2">GND</text>
<polygon points="796.1,350.1 813.4,350.1 813.4,359.1 796.1,359.1" fill="#FFFF80" stroke="#800000" stroke-width="1.1" stroke-linejoin="miter"/>
<text x="819" y="358.8" font-size="10" fill="#800000" stroke="#800000" stroke-width="0.2">CHASSIS_GND</text>
<line x1="711.9" y1="304" x2="796.1" y2="304" stroke="#000080" stroke-width="1.2"/>
<text x="711.9" y="303" font-size="10" fill="#800000" textLength="75.6" lengthAdjust="spacingAndGlyphs" stroke="#800000" stroke-width="0.2">PT_EXCITATION</text>
<line x1="711.9" y1="321" x2="796.1" y2="321" stroke="#000080" stroke-width="1.2"/>
<text x="711.9" y="319" font-size="10" fill="#800000" stroke="#800000" stroke-width="0.2">PT4</text>
<line x1="796.1" y1="337.8" x2="784.9" y2="337.8" stroke="#800000" stroke-width="1.1"/>
<line x1="784.9" y1="326.4" x2="784.9" y2="349.2" stroke="#800000" stroke-width="1.1"/>
<line x1="781.5" y1="329.6" x2="781.5" y2="346" stroke="#800000" stroke-width="1.1"/>
<line x1="778.1" y1="333.2" x2="778.1" y2="342.4" stroke="#800000" stroke-width="1.1"/>
<line x1="774.7" y1="336.4" x2="774.7" y2="339.2" stroke="#800000" stroke-width="1.1"/>
<text x="771.3" y="341.8" font-size="10" fill="#800000" text-anchor="end" stroke="#800000" stroke-width="0.2">GND</text>
<line x1="773.5" y1="354.6" x2="796.1" y2="354.6" stroke="#000080" stroke-width="1.2"/>
<line x1="773.5" y1="354" x2="773.5" y2="359.6" stroke="#000080" stroke-width="1.2"/>
<line x1="773.5" y1="359.6" x2="773.5" y2="365.7" stroke="#800000" stroke-width="1.1"/>
<line x1="762" y1="365.7" x2="785" y2="365.7" stroke="#800000" stroke-width="1.1"/>
<line x1="762" y1="365.7" x2="756.3" y2="377" stroke="#800000" stroke-width="1.1"/>
<line x1="773.5" y1="365.7" x2="767.8" y2="377" stroke="#800000" stroke-width="1.1"/>
<line x1="785" y1="365.7" x2="779.3" y2="377" stroke="#800000" stroke-width="1.1"/>
<text x="773.5" y="386.9" font-size="10" fill="#800000" text-anchor="middle" stroke="#800000" stroke-width="0.2">CHASSIS_GND</text>
<rect x="1009.4" y="152.4" width="107.4" height="73.1" fill="#80FF80" stroke="#800000" stroke-width="1.15"/>
<text x="1009.9" y="139.7" font-size="10" fill="#000080" stroke="#000080" stroke-width="0.2">Connector 3</text>
<text x="1009.9" y="150.7" font-size="10" fill="#000080" stroke="#000080" stroke-width="0.2">Connector</text>
<polygon points="1009.4,159.3 1026.7,159.3 1026.7,168.3 1009.4,168.3" fill="#FFFF80" stroke="#800000" stroke-width="1.1" stroke-linejoin="miter"/>
<text x="1032.3" y="168" font-size="10" fill="#800000" textLength="75.4" lengthAdjust="spacingAndGlyphs" stroke="#800000" stroke-width="0.2">PT_EXCITATION</text>
<polygon points="1009.4,180.8 1014.4,176.3 1026.7,176.3 1026.7,185.3 1014.4,185.3" fill="#FFFF80" stroke="#800000" stroke-width="1.1" stroke-linejoin="miter"/>
<text x="1032.3" y="185" font-size="10" fill="#800000" stroke="#800000" stroke-width="0.2">SIGNAL</text>
<polygon points="1009.4,193.1 1026.7,193.1 1026.7,202.1 1009.4,202.1" fill="#FFFF80" stroke="#800000" stroke-width="1.1" stroke-linejoin="miter"/>
<text x="1032.3" y="201.8" font-size="10" fill="#800000" stroke="#800000" stroke-width="0.2">GND</text>
<polygon points="1009.4,209.9 1026.7,209.9 1026.7,218.9 1009.4,218.9" fill="#FFFF80" stroke="#800000" stroke-width="1.1" stroke-linejoin="miter"/>
<text x="1032.3" y="218.6" font-size="10" fill="#800000" stroke="#800000" stroke-width="0.2">CHASSIS_GND</text>
<line x1="925.2" y1="163.8" x2="1009.4" y2="163.8" stroke="#000080" stroke-width="1.2"/>
<text x="925.2" y="162.8" font-size="10" fill="#800000" textLength="75.6" lengthAdjust="spacingAndGlyphs" stroke="#800000" stroke-width="0.2">PT_EXCITATION</text>
<line x1="925.2" y1="180.8" x2="1009.4" y2="180.8" stroke="#000080" stroke-width="1.2"/>
<text x="925.2" y="178.8" font-size="10" fill="#800000" stroke="#800000" stroke-width="0.2">PT8</text>
<line x1="1009.4" y1="197.6" x2="998.2" y2="197.6" stroke="#800000" stroke-width="1.1"/>
<line x1="998.2" y1="186.2" x2="998.2" y2="209" stroke="#800000" stroke-width="1.1"/>
<line x1="994.8" y1="189.4" x2="994.8" y2="205.8" stroke="#800000" stroke-width="1.1"/>
<line x1="991.4" y1="193" x2="991.4" y2="202.2" stroke="#800000" stroke-width="1.1"/>
<line x1="988" y1="196.2" x2="988" y2="199" stroke="#800000" stroke-width="1.1"/>
<text x="984.6" y="201.6" font-size="10" fill="#800000" text-anchor="end" stroke="#800000" stroke-width="0.2">GND</text>
<line x1="986.8" y1="214.4" x2="1009.4" y2="214.4" stroke="#000080" stroke-width="1.2"/>
<line x1="986.8" y1="213.8" x2="986.8" y2="219.4" stroke="#000080" stroke-width="1.2"/>
<line x1="986.8" y1="219.4" x2="986.8" y2="225.5" stroke="#800000" stroke-width="1.1"/>
<line x1="975.3" y1="225.5" x2="998.3" y2="225.5" stroke="#800000" stroke-width="1.1"/>
<line x1="975.3" y1="225.5" x2="969.6" y2="236.8" stroke="#800000" stroke-width="1.1"/>
<line x1="986.8" y1="225.5" x2="981.1" y2="236.8" stroke="#800000" stroke-width="1.1"/>
<line x1="998.3" y1="225.5" x2="992.6" y2="236.8" stroke="#800000" stroke-width="1.1"/>
<text x="986.8" y="246.7" font-size="10" fill="#800000" text-anchor="middle" stroke="#800000" stroke-width="0.2">CHASSIS_GND</text>
<rect x="1009.4" y="292.6" width="107.4" height="73.1" fill="#80FF80" stroke="#800000" stroke-width="1.15"/>
<text x="1009.9" y="280.8" font-size="10" fill="#000080" stroke="#000080" stroke-width="0.2">Connector 8</text>
<text x="1009.9" y="291.8" font-size="10" fill="#000080" stroke="#000080" stroke-width="0.2">Connector</text>
<polygon points="1009.4,299.5 1026.7,299.5 1026.7,308.5 1009.4,308.5" fill="#FFFF80" stroke="#800000" stroke-width="1.1" stroke-linejoin="miter"/>
<text x="1032.3" y="308.2" font-size="10" fill="#800000" textLength="75.4" lengthAdjust="spacingAndGlyphs" stroke="#800000" stroke-width="0.2">PT_EXCITATION</text>
<polygon points="1009.4,321 1014.4,316.5 1026.7,316.5 1026.7,325.5 1014.4,325.5" fill="#FFFF80" stroke="#800000" stroke-width="1.1" stroke-linejoin="miter"/>
<text x="1032.3" y="325.2" font-size="10" fill="#800000" stroke="#800000" stroke-width="0.2">SIGNAL</text>
<polygon points="1009.4,333.3 1026.7,333.3 1026.7,342.3 1009.4,342.3" fill="#FFFF80" stroke="#800000" stroke-width="1.1" stroke-linejoin="miter"/>
<text x="1032.3" y="342" font-size="10" fill="#800000" stroke="#800000" stroke-width="0.2">GND</text>
<polygon points="1009.4,350.1 1026.7,350.1 1026.7,359.1 1009.4,359.1" fill="#FFFF80" stroke="#800000" stroke-width="1.1" stroke-linejoin="miter"/>
<text x="1032.3" y="358.8" font-size="10" fill="#800000" stroke="#800000" stroke-width="0.2">CHASSIS_GND</text>
<line x1="925.2" y1="304" x2="1009.4" y2="304" stroke="#000080" stroke-width="1.2"/>
<text x="925.2" y="303" font-size="10" fill="#800000" textLength="75.6" lengthAdjust="spacingAndGlyphs" stroke="#800000" stroke-width="0.2">PT_EXCITATION</text>
<line x1="925.2" y1="321" x2="1009.4" y2="321" stroke="#000080" stroke-width="1.2"/>
<text x="925.2" y="319" font-size="10" fill="#800000" stroke="#800000" stroke-width="0.2">PT5</text>
<line x1="1009.4" y1="337.8" x2="998.2" y2="337.8" stroke="#800000" stroke-width="1.1"/>
<line x1="998.2" y1="326.4" x2="998.2" y2="349.2" stroke="#800000" stroke-width="1.1"/>
<line x1="994.8" y1="329.6" x2="994.8" y2="346" stroke="#800000" stroke-width="1.1"/>
<line x1="991.4" y1="333.2" x2="991.4" y2="342.4" stroke="#800000" stroke-width="1.1"/>
<line x1="988" y1="336.4" x2="988" y2="339.2" stroke="#800000" stroke-width="1.1"/>
<text x="984.6" y="341.8" font-size="10" fill="#800000" text-anchor="end" stroke="#800000" stroke-width="0.2">GND</text>
<line x1="986.8" y1="354.6" x2="1009.4" y2="354.6" stroke="#000080" stroke-width="1.2"/>
<line x1="986.8" y1="354" x2="986.8" y2="359.6" stroke="#000080" stroke-width="1.2"/>
<line x1="986.8" y1="359.6" x2="986.8" y2="365.7" stroke="#800000" stroke-width="1.1"/>
<line x1="975.3" y1="365.7" x2="998.3" y2="365.7" stroke="#800000" stroke-width="1.1"/>
<line x1="975.3" y1="365.7" x2="969.6" y2="377" stroke="#800000" stroke-width="1.1"/>
<line x1="986.8" y1="365.7" x2="981.1" y2="377" stroke="#800000" stroke-width="1.1"/>
<line x1="998.3" y1="365.7" x2="992.6" y2="377" stroke="#800000" stroke-width="1.1"/>
<text x="986.8" y="386.9" font-size="10" fill="#800000" text-anchor="middle" stroke="#800000" stroke-width="0.2">CHASSIS_GND</text>
<rect x="1222.8" y="152.4" width="107.4" height="73.1" fill="#80FF80" stroke="#800000" stroke-width="1.15"/>
<text x="1223.3" y="139.7" font-size="10" fill="#000080" stroke="#000080" stroke-width="0.2">Connector 4</text>
<text x="1223.3" y="150.7" font-size="10" fill="#000080" stroke="#000080" stroke-width="0.2">Connector</text>
<polygon points="1222.8,159.3 1240.1,159.3 1240.1,168.3 1222.8,168.3" fill="#FFFF80" stroke="#800000" stroke-width="1.1" stroke-linejoin="miter"/>
<text x="1245.7" y="168" font-size="10" fill="#800000" textLength="75.4" lengthAdjust="spacingAndGlyphs" stroke="#800000" stroke-width="0.2">PT_EXCITATION</text>
<polygon points="1222.8,180.8 1227.8,176.3 1240.1,176.3 1240.1,185.3 1227.8,185.3" fill="#FFFF80" stroke="#800000" stroke-width="1.1" stroke-linejoin="miter"/>
<text x="1245.7" y="185" font-size="10" fill="#800000" stroke="#800000" stroke-width="0.2">SIGNAL</text>
<polygon points="1222.8,193.1 1240.1,193.1 1240.1,202.1 1222.8,202.1" fill="#FFFF80" stroke="#800000" stroke-width="1.1" stroke-linejoin="miter"/>
<text x="1245.7" y="201.8" font-size="10" fill="#800000" stroke="#800000" stroke-width="0.2">GND</text>
<polygon points="1222.8,209.9 1240.1,209.9 1240.1,218.9 1222.8,218.9" fill="#FFFF80" stroke="#800000" stroke-width="1.1" stroke-linejoin="miter"/>
<text x="1245.7" y="218.6" font-size="10" fill="#800000" stroke="#800000" stroke-width="0.2">CHASSIS_GND</text>
<line x1="1138.6" y1="163.8" x2="1222.8" y2="163.8" stroke="#000080" stroke-width="1.2"/>
<text x="1138.6" y="162.8" font-size="10" fill="#800000" textLength="75.6" lengthAdjust="spacingAndGlyphs" stroke="#800000" stroke-width="0.2">PT_EXCITATION</text>
<line x1="1138.6" y1="180.8" x2="1222.8" y2="180.8" stroke="#000080" stroke-width="1.2"/>
<text x="1138.6" y="178.8" font-size="10" fill="#800000" stroke="#800000" stroke-width="0.2">PT6</text>
<line x1="1222.8" y1="197.6" x2="1211.6" y2="197.6" stroke="#800000" stroke-width="1.1"/>
<line x1="1211.6" y1="186.2" x2="1211.6" y2="209" stroke="#800000" stroke-width="1.1"/>
<line x1="1208.2" y1="189.4" x2="1208.2" y2="205.8" stroke="#800000" stroke-width="1.1"/>
<line x1="1204.8" y1="193" x2="1204.8" y2="202.2" stroke="#800000" stroke-width="1.1"/>
<line x1="1201.4" y1="196.2" x2="1201.4" y2="199" stroke="#800000" stroke-width="1.1"/>
<text x="1198" y="201.6" font-size="10" fill="#800000" text-anchor="end" stroke="#800000" stroke-width="0.2">GND</text>
<line x1="1200.2" y1="214.4" x2="1222.8" y2="214.4" stroke="#000080" stroke-width="1.2"/>
<line x1="1200.2" y1="213.8" x2="1200.2" y2="219.4" stroke="#000080" stroke-width="1.2"/>
<line x1="1200.2" y1="219.4" x2="1200.2" y2="225.5" stroke="#800000" stroke-width="1.1"/>
<line x1="1188.7" y1="225.5" x2="1211.7" y2="225.5" stroke="#800000" stroke-width="1.1"/>
<line x1="1188.7" y1="225.5" x2="1183" y2="236.8" stroke="#800000" stroke-width="1.1"/>
<line x1="1200.2" y1="225.5" x2="1194.5" y2="236.8" stroke="#800000" stroke-width="1.1"/>
<line x1="1211.7" y1="225.5" x2="1206" y2="236.8" stroke="#800000" stroke-width="1.1"/>
<text x="1200.2" y="246.7" font-size="10" fill="#800000" text-anchor="middle" stroke="#800000" stroke-width="0.2">CHASSIS_GND</text>
<rect x="1222.8" y="292.6" width="107.4" height="73.1" fill="#80FF80" stroke="#800000" stroke-width="1.15"/>
<text x="1223.3" y="280.8" font-size="10" fill="#000080" stroke="#000080" stroke-width="0.2">Connector 9</text>
<text x="1223.3" y="291.8" font-size="10" fill="#000080" stroke="#000080" stroke-width="0.2">Connector</text>
<polygon points="1222.8,299.5 1240.1,299.5 1240.1,308.5 1222.8,308.5" fill="#FFFF80" stroke="#800000" stroke-width="1.1" stroke-linejoin="miter"/>
<text x="1245.7" y="308.2" font-size="10" fill="#800000" textLength="75.4" lengthAdjust="spacingAndGlyphs" stroke="#800000" stroke-width="0.2">PT_EXCITATION</text>
<polygon points="1222.8,321 1227.8,316.5 1240.1,316.5 1240.1,325.5 1227.8,325.5" fill="#FFFF80" stroke="#800000" stroke-width="1.1" stroke-linejoin="miter"/>
<text x="1245.7" y="325.2" font-size="10" fill="#800000" stroke="#800000" stroke-width="0.2">SIGNAL</text>
<polygon points="1222.8,333.3 1240.1,333.3 1240.1,342.3 1222.8,342.3" fill="#FFFF80" stroke="#800000" stroke-width="1.1" stroke-linejoin="miter"/>
<text x="1245.7" y="342" font-size="10" fill="#800000" stroke="#800000" stroke-width="0.2">GND</text>
<polygon points="1222.8,350.1 1240.1,350.1 1240.1,359.1 1222.8,359.1" fill="#FFFF80" stroke="#800000" stroke-width="1.1" stroke-linejoin="miter"/>
<text x="1245.7" y="358.8" font-size="10" fill="#800000" stroke="#800000" stroke-width="0.2">CHASSIS_GND</text>
<line x1="1138.6" y1="304" x2="1222.8" y2="304" stroke="#000080" stroke-width="1.2"/>
<text x="1138.6" y="303" font-size="10" fill="#800000" textLength="75.6" lengthAdjust="spacingAndGlyphs" stroke="#800000" stroke-width="0.2">PT_EXCITATION</text>
<line x1="1138.6" y1="321" x2="1222.8" y2="321" stroke="#000080" stroke-width="1.2"/>
<text x="1138.6" y="319" font-size="10" fill="#800000" stroke="#800000" stroke-width="0.2">PT7</text>
<line x1="1222.8" y1="337.8" x2="1211.6" y2="337.8" stroke="#800000" stroke-width="1.1"/>
<line x1="1211.6" y1="326.4" x2="1211.6" y2="349.2" stroke="#800000" stroke-width="1.1"/>
<line x1="1208.2" y1="329.6" x2="1208.2" y2="346" stroke="#800000" stroke-width="1.1"/>
<line x1="1204.8" y1="333.2" x2="1204.8" y2="342.4" stroke="#800000" stroke-width="1.1"/>
<line x1="1201.4" y1="336.4" x2="1201.4" y2="339.2" stroke="#800000" stroke-width="1.1"/>
<text x="1198" y="341.8" font-size="10" fill="#800000" text-anchor="end" stroke="#800000" stroke-width="0.2">GND</text>
<line x1="1200.2" y1="354.6" x2="1222.8" y2="354.6" stroke="#000080" stroke-width="1.2"/>
<line x1="1200.2" y1="354" x2="1200.2" y2="359.6" stroke="#000080" stroke-width="1.2"/>
<line x1="1200.2" y1="359.6" x2="1200.2" y2="365.7" stroke="#800000" stroke-width="1.1"/>
<line x1="1188.7" y1="365.7" x2="1211.7" y2="365.7" stroke="#800000" stroke-width="1.1"/>
<line x1="1188.7" y1="365.7" x2="1183" y2="377" stroke="#800000" stroke-width="1.1"/>
<line x1="1200.2" y1="365.7" x2="1194.5" y2="377" stroke="#800000" stroke-width="1.1"/>
<line x1="1211.7" y1="365.7" x2="1206" y2="377" stroke="#800000" stroke-width="1.1"/>
<text x="1200.2" y="386.9" font-size="10" fill="#800000" text-anchor="middle" stroke="#800000" stroke-width="0.2">CHASSIS_GND</text>
<rect x="1436.2" y="152.4" width="107.4" height="73.1" fill="#80FF80" stroke="#800000" stroke-width="1.15"/>
<text x="1436.7" y="139.7" font-size="10" fill="#000080" stroke="#000080" stroke-width="0.2">Connector 5</text>
<text x="1436.7" y="150.7" font-size="10" fill="#000080" stroke="#000080" stroke-width="0.2">Connector</text>
<polygon points="1436.2,159.3 1453.5,159.3 1453.5,168.3 1436.2,168.3" fill="#FFFF80" stroke="#800000" stroke-width="1.1" stroke-linejoin="miter"/>
<text x="1459.1" y="168" font-size="10" fill="#800000" textLength="75.4" lengthAdjust="spacingAndGlyphs" stroke="#800000" stroke-width="0.2">PT_EXCITATION</text>
<polygon points="1436.2,180.8 1441.2,176.3 1453.5,176.3 1453.5,185.3 1441.2,185.3" fill="#FFFF80" stroke="#800000" stroke-width="1.1" stroke-linejoin="miter"/>
<text x="1459.1" y="185" font-size="10" fill="#800000" stroke="#800000" stroke-width="0.2">SIGNAL</text>
<polygon points="1436.2,193.1 1453.5,193.1 1453.5,202.1 1436.2,202.1" fill="#FFFF80" stroke="#800000" stroke-width="1.1" stroke-linejoin="miter"/>
<text x="1459.1" y="201.8" font-size="10" fill="#800000" stroke="#800000" stroke-width="0.2">GND</text>
<polygon points="1436.2,209.9 1453.5,209.9 1453.5,218.9 1436.2,218.9" fill="#FFFF80" stroke="#800000" stroke-width="1.1" stroke-linejoin="miter"/>
<text x="1459.1" y="218.6" font-size="10" fill="#800000" stroke="#800000" stroke-width="0.2">CHASSIS_GND</text>
<line x1="1352" y1="163.8" x2="1436.2" y2="163.8" stroke="#000080" stroke-width="1.2"/>
<text x="1352" y="162.8" font-size="10" fill="#800000" textLength="75.6" lengthAdjust="spacingAndGlyphs" stroke="#800000" stroke-width="0.2">PT_EXCITATION</text>
<line x1="1352" y1="180.8" x2="1436.2" y2="180.8" stroke="#000080" stroke-width="1.2"/>
<text x="1352" y="178.8" font-size="10" fill="#800000" stroke="#800000" stroke-width="0.2">PT10</text>
<line x1="1436.2" y1="197.6" x2="1425" y2="197.6" stroke="#800000" stroke-width="1.1"/>
<line x1="1425" y1="186.2" x2="1425" y2="209" stroke="#800000" stroke-width="1.1"/>
<line x1="1421.6" y1="189.4" x2="1421.6" y2="205.8" stroke="#800000" stroke-width="1.1"/>
<line x1="1418.2" y1="193" x2="1418.2" y2="202.2" stroke="#800000" stroke-width="1.1"/>
<line x1="1414.8" y1="196.2" x2="1414.8" y2="199" stroke="#800000" stroke-width="1.1"/>
<text x="1411.4" y="201.6" font-size="10" fill="#800000" text-anchor="end" stroke="#800000" stroke-width="0.2">GND</text>
<line x1="1413.6" y1="214.4" x2="1436.2" y2="214.4" stroke="#000080" stroke-width="1.2"/>
<line x1="1413.6" y1="213.8" x2="1413.6" y2="219.4" stroke="#000080" stroke-width="1.2"/>
<line x1="1413.6" y1="219.4" x2="1413.6" y2="225.5" stroke="#800000" stroke-width="1.1"/>
<line x1="1402.1" y1="225.5" x2="1425.1" y2="225.5" stroke="#800000" stroke-width="1.1"/>
<line x1="1402.1" y1="225.5" x2="1396.4" y2="236.8" stroke="#800000" stroke-width="1.1"/>
<line x1="1413.6" y1="225.5" x2="1407.9" y2="236.8" stroke="#800000" stroke-width="1.1"/>
<line x1="1425.1" y1="225.5" x2="1419.4" y2="236.8" stroke="#800000" stroke-width="1.1"/>
<text x="1413.6" y="246.7" font-size="10" fill="#800000" text-anchor="middle" stroke="#800000" stroke-width="0.2">CHASSIS_GND</text>
<rect x="1436.2" y="292.6" width="107.4" height="73.1" fill="#80FF80" stroke="#800000" stroke-width="1.15"/>
<text x="1436.7" y="280.8" font-size="10" fill="#000080" stroke="#000080" stroke-width="0.2">Connector 10</text>
<text x="1436.7" y="291.8" font-size="10" fill="#000080" stroke="#000080" stroke-width="0.2">Connector</text>
<polygon points="1436.2,299.5 1453.5,299.5 1453.5,308.5 1436.2,308.5" fill="#FFFF80" stroke="#800000" stroke-width="1.1" stroke-linejoin="miter"/>
<text x="1459.1" y="308.2" font-size="10" fill="#800000" textLength="75.4" lengthAdjust="spacingAndGlyphs" stroke="#800000" stroke-width="0.2">PT_EXCITATION</text>
<polygon points="1436.2,321 1441.2,316.5 1453.5,316.5 1453.5,325.5 1441.2,325.5" fill="#FFFF80" stroke="#800000" stroke-width="1.1" stroke-linejoin="miter"/>
<text x="1459.1" y="325.2" font-size="10" fill="#800000" stroke="#800000" stroke-width="0.2">SIGNAL</text>
<polygon points="1436.2,333.3 1453.5,333.3 1453.5,342.3 1436.2,342.3" fill="#FFFF80" stroke="#800000" stroke-width="1.1" stroke-linejoin="miter"/>
<text x="1459.1" y="342" font-size="10" fill="#800000" stroke="#800000" stroke-width="0.2">GND</text>
<polygon points="1436.2,350.1 1453.5,350.1 1453.5,359.1 1436.2,359.1" fill="#FFFF80" stroke="#800000" stroke-width="1.1" stroke-linejoin="miter"/>
<text x="1459.1" y="358.8" font-size="10" fill="#800000" stroke="#800000" stroke-width="0.2">CHASSIS_GND</text>
<line x1="1352" y1="304" x2="1436.2" y2="304" stroke="#000080" stroke-width="1.2"/>
<text x="1352" y="303" font-size="10" fill="#800000" textLength="75.6" lengthAdjust="spacingAndGlyphs" stroke="#800000" stroke-width="0.2">PT_EXCITATION</text>
<line x1="1352" y1="321" x2="1436.2" y2="321" stroke="#000080" stroke-width="1.2"/>
<text x="1352" y="319" font-size="10" fill="#800000" stroke="#800000" stroke-width="0.2">PT9</text>
<line x1="1436.2" y1="337.8" x2="1425" y2="337.8" stroke="#800000" stroke-width="1.1"/>
<line x1="1425" y1="326.4" x2="1425" y2="349.2" stroke="#800000" stroke-width="1.1"/>
<line x1="1421.6" y1="329.6" x2="1421.6" y2="346" stroke="#800000" stroke-width="1.1"/>
<line x1="1418.2" y1="333.2" x2="1418.2" y2="342.4" stroke="#800000" stroke-width="1.1"/>
<line x1="1414.8" y1="336.4" x2="1414.8" y2="339.2" stroke="#800000" stroke-width="1.1"/>
<text x="1411.4" y="341.8" font-size="10" fill="#800000" text-anchor="end" stroke="#800000" stroke-width="0.2">GND</text>
<line x1="1413.6" y1="354.6" x2="1436.2" y2="354.6" stroke="#000080" stroke-width="1.2"/>
<line x1="1413.6" y1="354" x2="1413.6" y2="359.6" stroke="#000080" stroke-width="1.2"/>
<line x1="1413.6" y1="359.6" x2="1413.6" y2="365.7" stroke="#800000" stroke-width="1.1"/>
<line x1="1402.1" y1="365.7" x2="1425.1" y2="365.7" stroke="#800000" stroke-width="1.1"/>
<line x1="1402.1" y1="365.7" x2="1396.4" y2="377" stroke="#800000" stroke-width="1.1"/>
<line x1="1413.6" y1="365.7" x2="1407.9" y2="377" stroke="#800000" stroke-width="1.1"/>
<line x1="1425.1" y1="365.7" x2="1419.4" y2="377" stroke="#800000" stroke-width="1.1"/>
<text x="1413.6" y="386.9" font-size="10" fill="#800000" text-anchor="middle" stroke="#800000" stroke-width="0.2">CHASSIS_GND</text>
<rect x="448.2" y="472.7" width="437.8" height="336.1" fill="none" stroke="#1a1a1a" stroke-width="1.3"/>
<text x="651.3" y="507.7" font-size="30.2" fill="#000080" textLength="218.9" lengthAdjust="spacingAndGlyphs" stroke="#000080" stroke-width="0.3">ADC + Ref Block</text>
<rect x="554.3" y="545.5" width="129.6" height="33.6" fill="#80FF80" stroke="#800000" stroke-width="1.15"/>
<text x="554.8" y="532.8" font-size="10" fill="#000080" stroke="#000080" stroke-width="0.2">Reference</text>
<text x="554.8" y="543.8" font-size="10" fill="#000080" stroke="#000080" stroke-width="0.2">Reference</text>
<polygon points="554.3,557 559.3,552.5 571.6,552.5 571.6,561.5 559.3,561.5" fill="#FFFF80" stroke="#800000" stroke-width="1.1" stroke-linejoin="miter"/>
<text x="577.2" y="561.2" font-size="10" fill="#800000" stroke="#800000" stroke-width="0.2">5V_REF</text>
<polygon points="554.3,563.7 571.6,563.7 571.6,572.7 554.3,572.7" fill="#FFFF80" stroke="#800000" stroke-width="1.1" stroke-linejoin="miter"/>
<text x="577.2" y="572.4" font-size="10" fill="#800000" stroke="#800000" stroke-width="0.2">5V5_IN</text>
<polygon points="666.6,563.7 683.9,563.7 683.9,572.7 666.6,572.7" fill="#FFFF80" stroke="#800000" stroke-width="1.1" stroke-linejoin="miter"/>
<text x="661" y="572.4" font-size="10" fill="#800000" text-anchor="end" stroke="#800000" stroke-width="0.2">GND</text>
<line x1="543.4" y1="557" x2="554.3" y2="557" stroke="#800000" stroke-width="1.1"/>
<line x1="543.4" y1="551.2" x2="543.4" y2="562.8" stroke="#800000" stroke-width="1.1"/>
<text x="541.4" y="560.9" font-size="10" fill="#800000" text-anchor="end" stroke="#800000" stroke-width="0.2">5V_REF</text>
<line x1="543.4" y1="568.2" x2="554.3" y2="568.2" stroke="#800000" stroke-width="1.1"/>
<line x1="543.4" y1="562.4" x2="543.4" y2="574" stroke="#800000" stroke-width="1.1"/>
<text x="541.4" y="572.1" font-size="10" fill="#800000" text-anchor="end" stroke="#800000" stroke-width="0.2">5V5_IN</text>
<line x1="683.9" y1="568.2" x2="695.1" y2="568.2" stroke="#800000" stroke-width="1.1"/>
<line x1="695.1" y1="556.8" x2="695.1" y2="579.6" stroke="#800000" stroke-width="1.1"/>
<line x1="698.5" y1="560" x2="698.5" y2="576.4" stroke="#800000" stroke-width="1.1"/>
<line x1="701.9" y1="563.6" x2="701.9" y2="572.8" stroke="#800000" stroke-width="1.1"/>
<line x1="705.3" y1="566.8" x2="705.3" y2="569.6" stroke="#800000" stroke-width="1.1"/>
<text x="708.7" y="572.2" font-size="10" fill="#800000" stroke="#800000" stroke-width="0.2">GND</text>
<rect x="554.3" y="607.2" width="202.8" height="185.4" fill="#80FF80" stroke="#800000" stroke-width="1.15"/>
<text x="554.8" y="594.5" font-size="10" fill="#000080" stroke="#000080" stroke-width="0.2">ADC</text>
<text x="554.8" y="605.5" font-size="10" fill="#000080" stroke="#000080" stroke-width="0.2">ADC</text>
<polygon points="554.3,614 571.6,614 571.6,623 554.3,623" fill="#FFFF80" stroke="#800000" stroke-width="1.1" stroke-linejoin="miter"/>
<text x="577.2" y="623" font-size="10" fill="#800000" stroke="#800000" stroke-width="0.2">5V</text>
<polygon points="554.3,625.3 571.6,625.3 571.6,634.3 554.3,634.3" fill="#FFFF80" stroke="#800000" stroke-width="1.1" stroke-linejoin="miter"/>
<text x="577.2" y="634.3" font-size="10" fill="#800000" stroke="#800000" stroke-width="0.2">3V3</text>
<line x1="543.4" y1="618.5" x2="554.3" y2="618.5" stroke="#800000" stroke-width="1.1"/>
<line x1="543.4" y1="612.7" x2="543.4" y2="624.3" stroke="#800000" stroke-width="1.1"/>
<text x="541.4" y="622.8" font-size="10" fill="#800000" text-anchor="end" stroke="#800000" stroke-width="0.2">5V</text>
<line x1="543.4" y1="629.8" x2="554.3" y2="629.8" stroke="#800000" stroke-width="1.1"/>
<line x1="543.4" y1="624" x2="543.4" y2="635.6" stroke="#800000" stroke-width="1.1"/>
<text x="541.4" y="634.1" font-size="10" fill="#800000" text-anchor="end" stroke="#800000" stroke-width="0.2">3V3</text>
<polygon points="554.3,647.7 566.6,647.7 571.6,652.2 566.6,656.7 554.3,656.7" fill="#FFFF80" stroke="#800000" stroke-width="1.1" stroke-linejoin="miter"/>
<text x="577.2" y="656.7" font-size="10" fill="#800000" stroke="#800000" stroke-width="0.2">SIGNAL_0_IN</text>
<line x1="526.5" y1="652.2" x2="554.3" y2="652.2" stroke="#000080" stroke-width="1.2"/>
<text x="526.5" y="650.8" font-size="10" fill="#800000" stroke="#800000" stroke-width="0.2">PT1</text>
<polygon points="554.3,658.93 566.6,658.93 571.6,663.43 566.6,667.93 554.3,667.93" fill="#FFFF80" stroke="#800000" stroke-width="1.1" stroke-linejoin="miter"/>
<text x="577.2" y="667.93" font-size="10" fill="#800000" stroke="#800000" stroke-width="0.2">SIGNAL_1_IN</text>
<line x1="526.5" y1="663.43" x2="554.3" y2="663.43" stroke="#000080" stroke-width="1.2"/>
<text x="526.5" y="662.03" font-size="10" fill="#800000" stroke="#800000" stroke-width="0.2">PT2</text>
<polygon points="554.3,670.16 566.6,670.16 571.6,674.66 566.6,679.16 554.3,679.16" fill="#FFFF80" stroke="#800000" stroke-width="1.1" stroke-linejoin="miter"/>
<text x="577.2" y="679.16" font-size="10" fill="#800000" stroke="#800000" stroke-width="0.2">SIGNAL_2_IN</text>
<line x1="526.5" y1="674.66" x2="554.3" y2="674.66" stroke="#000080" stroke-width="1.2"/>
<text x="526.5" y="673.26" font-size="10" fill="#800000" stroke="#800000" stroke-width="0.2">PT3</text>
<polygon points="554.3,681.39 566.6,681.39 571.6,685.89 566.6,690.39 554.3,690.39" fill="#FFFF80" stroke="#800000" stroke-width="1.1" stroke-linejoin="miter"/>
<text x="577.2" y="690.39" font-size="10" fill="#800000" stroke="#800000" stroke-width="0.2">SIGNAL_3_IN</text>
<line x1="526.5" y1="685.89" x2="554.3" y2="685.89" stroke="#000080" stroke-width="1.2"/>
<text x="526.5" y="684.49" font-size="10" fill="#800000" stroke="#800000" stroke-width="0.2">PT4</text>
<polygon points="554.3,692.62 566.6,692.62 571.6,697.12 566.6,701.62 554.3,701.62" fill="#FFFF80" stroke="#800000" stroke-width="1.1" stroke-linejoin="miter"/>
<text x="577.2" y="701.62" font-size="10" fill="#800000" stroke="#800000" stroke-width="0.2">SIGNAL_4_IN</text>
<line x1="526.5" y1="697.12" x2="554.3" y2="697.12" stroke="#000080" stroke-width="1.2"/>
<text x="526.5" y="695.72" font-size="10" fill="#800000" stroke="#800000" stroke-width="0.2">PT5</text>
<polygon points="554.3,703.85 566.6,703.85 571.6,708.35 566.6,712.85 554.3,712.85" fill="#FFFF80" stroke="#800000" stroke-width="1.1" stroke-linejoin="miter"/>
<text x="577.2" y="712.85" font-size="10" fill="#800000" stroke="#800000" stroke-width="0.2">SIGNAL_5_IN</text>
<line x1="526.5" y1="708.35" x2="554.3" y2="708.35" stroke="#000080" stroke-width="1.2"/>
<text x="526.5" y="706.95" font-size="10" fill="#800000" stroke="#800000" stroke-width="0.2">PT6</text>
<polygon points="554.3,715.08 566.6,715.08 571.6,719.58 566.6,724.08 554.3,724.08" fill="#FFFF80" stroke="#800000" stroke-width="1.1" stroke-linejoin="miter"/>
<text x="577.2" y="724.08" font-size="10" fill="#800000" stroke="#800000" stroke-width="0.2">SIGNAL_6_IN</text>
<line x1="526.5" y1="719.58" x2="554.3" y2="719.58" stroke="#000080" stroke-width="1.2"/>
<text x="526.5" y="718.18" font-size="10" fill="#800000" stroke="#800000" stroke-width="0.2">PT7</text>
<polygon points="554.3,726.31 566.6,726.31 571.6,730.81 566.6,735.31 554.3,735.31" fill="#FFFF80" stroke="#800000" stroke-width="1.1" stroke-linejoin="miter"/>
<text x="577.2" y="735.31" font-size="10" fill="#800000" stroke="#800000" stroke-width="0.2">SIGNAL_7_IN</text>
<line x1="526.5" y1="730.81" x2="554.3" y2="730.81" stroke="#000080" stroke-width="1.2"/>
<text x="526.5" y="729.41" font-size="10" fill="#800000" stroke="#800000" stroke-width="0.2">PT8</text>
<polygon points="554.3,737.54 566.6,737.54 571.6,742.04 566.6,746.54 554.3,746.54" fill="#FFFF80" stroke="#800000" stroke-width="1.1" stroke-linejoin="miter"/>
<text x="577.2" y="746.54" font-size="10" fill="#800000" stroke="#800000" stroke-width="0.2">SIGNAL_8_IN</text>
<line x1="526.5" y1="742.04" x2="554.3" y2="742.04" stroke="#000080" stroke-width="1.2"/>
<text x="526.5" y="740.64" font-size="10" fill="#800000" stroke="#800000" stroke-width="0.2">PT9</text>
<polygon points="554.3,748.77 566.6,748.77 571.6,753.27 566.6,757.77 554.3,757.77" fill="#FFFF80" stroke="#800000" stroke-width="1.1" stroke-linejoin="miter"/>
<text x="577.2" y="757.77" font-size="10" fill="#800000" stroke="#800000" stroke-width="0.2">SIGNAL_9_IN</text>
<line x1="526.5" y1="753.27" x2="554.3" y2="753.27" stroke="#000080" stroke-width="1.2"/>
<text x="526.5" y="751.87" font-size="10" fill="#800000" stroke="#800000" stroke-width="0.2">PT10</text>
<polygon points="739.8,635.4 744.8,630.9 757.1,630.9 757.1,639.9 744.8,639.9" fill="#FFFF80" stroke="#800000" stroke-width="1.1" stroke-linejoin="miter"/>
<text x="734.2" y="639.9" font-size="10" fill="#800000" text-anchor="end" stroke="#800000" stroke-width="0.2">ADC_MOSI</text>
<line x1="757.1" y1="635.4" x2="819" y2="635.4" stroke="#000080" stroke-width="1.2"/>
<text x="818.2" y="633.8" font-size="10" fill="#800000" text-anchor="end" stroke="#800000" stroke-width="0.2">ADC_MOSI</text>
<polygon points="739.8,642.13 752.1,642.13 757.1,646.63 752.1,651.13 739.8,651.13" fill="#FFFF80" stroke="#800000" stroke-width="1.1" stroke-linejoin="miter"/>
<text x="734.2" y="651.13" font-size="10" fill="#800000" text-anchor="end" stroke="#800000" stroke-width="0.2">ADC_MISO</text>
<line x1="757.1" y1="646.63" x2="819" y2="646.63" stroke="#000080" stroke-width="1.2"/>
<text x="818.2" y="645.03" font-size="10" fill="#800000" text-anchor="end" stroke="#800000" stroke-width="0.2">ADC_MISO</text>
<polygon points="739.8,653.36 757.1,653.36 757.1,662.36 739.8,662.36" fill="#FFFF80" stroke="#800000" stroke-width="1.1" stroke-linejoin="miter"/>
<text x="734.2" y="662.36" font-size="10" fill="#800000" text-anchor="end" stroke="#800000" stroke-width="0.2">ADC_SCLK</text>
<line x1="757.1" y1="657.86" x2="819" y2="657.86" stroke="#000080" stroke-width="1.2"/>
<text x="818.2" y="656.26" font-size="10" fill="#800000" text-anchor="end" stroke="#800000" stroke-width="0.2">ADC_SCLK</text>
<polygon points="739.8,680.32 744.8,675.82 757.1,675.82 757.1,684.82 744.8,684.82" fill="#FFFF80" stroke="#800000" stroke-width="1.1" stroke-linejoin="miter"/>
<text x="734.2" y="684.82" font-size="10" fill="#800000" text-anchor="end" stroke="#800000" stroke-width="0.2">CS</text>
<line x1="757.1" y1="680.32" x2="819" y2="680.32" stroke="#000080" stroke-width="1.2"/>
<text x="818.2" y="678.72" font-size="10" fill="#800000" text-anchor="end" stroke="#800000" stroke-width="0.2">ADC_CS</text>
<polygon points="739.8,687.05 752.1,687.05 757.1,691.55 752.1,696.05 739.8,696.05" fill="#FFFF80" stroke="#800000" stroke-width="1.1" stroke-linejoin="miter"/>
<text x="734.2" y="696.05" font-size="10" fill="#800000" text-anchor="end" stroke="#800000" stroke-width="0.2">DRDY</text>
<line x1="757.1" y1="691.55" x2="819" y2="691.55" stroke="#000080" stroke-width="1.2"/>
<text x="818.2" y="689.95" font-size="10" fill="#800000" text-anchor="end" stroke="#800000" stroke-width="0.2">DRDY</text>
<polygon points="739.8,702.78 744.8,698.28 757.1,698.28 757.1,707.28 744.8,707.28" fill="#FFFF80" stroke="#800000" stroke-width="1.1" stroke-linejoin="miter"/>
<text x="732.8" y="707.28" font-size="10" fill="#800000" text-anchor="end" stroke="#800000" stroke-width="0.2">START</text>
<line x1="757.1" y1="702.78" x2="819" y2="702.78" stroke="#000080" stroke-width="1.2"/>
<text x="818.2" y="701.18" font-size="10" fill="#800000" text-anchor="end" stroke="#800000" stroke-width="0.2">START</text>
<polygon points="739.8,715.12 757.1,715.12 757.1,724.12 739.8,724.12" fill="#FFFF80" stroke="#800000" stroke-width="1.1" stroke-linejoin="miter"/>
<text x="734.2" y="724.12" font-size="10" fill="#800000" text-anchor="end" stroke="#800000" stroke-width="0.2">RESET</text>
<line x1="757.1" y1="719.62" x2="819" y2="719.62" stroke="#000080" stroke-width="1.2"/>
<text x="809.8" y="717.92" font-size="10" fill="#800000" text-anchor="end" stroke="#800000" stroke-width="0.2">RESET</text>
<polygon points="739.8,726.36 757.1,726.36 757.1,735.36 739.8,735.36" fill="#FFFF80" stroke="#800000" stroke-width="1.1" stroke-linejoin="miter"/>
<text x="734.2" y="735.36" font-size="10" fill="#800000" text-anchor="end" stroke="#800000" stroke-width="0.2">5V_REF</text>
<line x1="757.1" y1="730.86" x2="768.3" y2="730.86" stroke="#800000" stroke-width="1.1"/>
<line x1="768.3" y1="725.06" x2="768.3" y2="736.65" stroke="#800000" stroke-width="1.1"/>
<text x="770.7" y="734.86" font-size="10" fill="#800000" stroke="#800000" stroke-width="0.2">5V_REF</text>
<polygon points="739.8,737.59 757.1,737.59 757.1,746.59 739.8,746.59" fill="#FFFF80" stroke="#800000" stroke-width="1.1" stroke-linejoin="miter"/>
<text x="731.6" y="746.59" font-size="10" fill="#800000" text-anchor="end" textLength="75.4" lengthAdjust="spacingAndGlyphs" stroke="#800000" stroke-width="0.2">PT_EXCITATION</text>
<polyline points="757.1,742.09 768,742.09 768,747.29 847.2,747.29" fill="none" stroke="#000080" stroke-width="1.2"/>
<text x="768.8" y="745.99" font-size="10" fill="#800000" textLength="75.8" lengthAdjust="spacingAndGlyphs" stroke="#800000" stroke-width="0.2">PT_EXCITATION</text>
<polygon points="739.8,776.89 757.1,776.89 757.1,785.89 739.8,785.89" fill="#FFFF80" stroke="#800000" stroke-width="1.1" stroke-linejoin="miter"/>
<text x="734.2" y="785.89" font-size="10" fill="#800000" text-anchor="end" stroke="#800000" stroke-width="0.2">GND</text>
<line x1="757.1" y1="781.39" x2="768.3" y2="781.39" stroke="#800000" stroke-width="1.1"/>
<line x1="768.3" y1="769.99" x2="768.3" y2="792.79" stroke="#800000" stroke-width="1.1"/>
<line x1="771.7" y1="773.19" x2="771.7" y2="789.59" stroke="#800000" stroke-width="1.1"/>
<line x1="775.1" y1="776.79" x2="775.1" y2="785.99" stroke="#800000" stroke-width="1.1"/>
<line x1="778.5" y1="779.99" x2="778.5" y2="782.79" stroke="#800000" stroke-width="1.1"/>
<text x="781.9" y="785.99" font-size="10" fill="#800000" stroke="#800000" stroke-width="0.2">GND</text>
<rect x="897.3" y="472.7" width="988.7" height="336.1" fill="none" stroke="#1a1a1a" stroke-width="1.3"/>
<text x="1480.6" y="520" font-size="30.2" fill="#000080" textLength="246.7" lengthAdjust="spacingAndGlyphs" stroke="#000080" stroke-width="0.3">ESP &amp; Power Block</text>
<rect x="1082.4" y="528.2" width="45.2" height="259.1" fill="#f1f4fa"/>
<path d="M1116 528.2 Q1127.6 528.2 1127.6 539.2 L1127.6 591.4 Q1127.6 599.9 1136.1 601.4 Q1127.6 602.9 1127.6 611.4 L1127.6 776.3 Q1127.6 787.3 1116 787.3" fill="none" stroke="#8c9acc" stroke-width="1.1"/>
<text x="1066.1" y="515.9" font-size="10" fill="#000080" textLength="76" lengthAdjust="spacingAndGlyphs" stroke="#000080" stroke-width="0.2">COMPUTE_GPIO</text>
<line x1="1021.2" y1="530.1" x2="1030.4" y2="539.3" stroke="#FF0000" stroke-width="1.1"/>
<line x1="1021.2" y1="539.3" x2="1030.4" y2="530.1" stroke="#FF0000" stroke-width="1.1"/>
<line x1="1021.2" y1="541.32" x2="1030.4" y2="550.52" stroke="#FF0000" stroke-width="1.1"/>
<line x1="1021.2" y1="550.52" x2="1030.4" y2="541.32" stroke="#FF0000" stroke-width="1.1"/>
<line x1="1021.2" y1="552.54" x2="1030.4" y2="561.74" stroke="#FF0000" stroke-width="1.1"/>
<line x1="1021.2" y1="561.74" x2="1030.4" y2="552.54" stroke="#FF0000" stroke-width="1.1"/>
<line x1="1021.2" y1="563.76" x2="1030.4" y2="572.96" stroke="#FF0000" stroke-width="1.1"/>
<line x1="1021.2" y1="572.96" x2="1030.4" y2="563.76" stroke="#FF0000" stroke-width="1.1"/>
<line x1="1021.2" y1="574.98" x2="1030.4" y2="584.18" stroke="#FF0000" stroke-width="1.1"/>
<line x1="1021.2" y1="584.18" x2="1030.4" y2="574.98" stroke="#FF0000" stroke-width="1.1"/>
<line x1="1021.2" y1="586.2" x2="1030.4" y2="595.4" stroke="#FF0000" stroke-width="1.1"/>
<line x1="1021.2" y1="595.4" x2="1030.4" y2="586.2" stroke="#FF0000" stroke-width="1.1"/>
<line x1="1021.2" y1="597.42" x2="1030.4" y2="606.62" stroke="#FF0000" stroke-width="1.1"/>
<line x1="1021.2" y1="606.62" x2="1030.4" y2="597.42" stroke="#FF0000" stroke-width="1.1"/>
<line x1="1021.2" y1="675.96" x2="1030.4" y2="685.16" stroke="#FF0000" stroke-width="1.1"/>
<line x1="1021.2" y1="685.16" x2="1030.4" y2="675.96" stroke="#FF0000" stroke-width="1.1"/>
<line x1="1021.2" y1="698.4" x2="1030.4" y2="707.6" stroke="#FF0000" stroke-width="1.1"/>
<line x1="1021.2" y1="707.6" x2="1030.4" y2="698.4" stroke="#FF0000" stroke-width="1.1"/>
<line x1="1021.2" y1="709.62" x2="1030.4" y2="718.82" stroke="#FF0000" stroke-width="1.1"/>
<line x1="1021.2" y1="718.82" x2="1030.4" y2="709.62" stroke="#FF0000" stroke-width="1.1"/>
<line x1="1021.2" y1="732.06" x2="1030.4" y2="741.26" stroke="#FF0000" stroke-width="1.1"/>
<line x1="1021.2" y1="741.26" x2="1030.4" y2="732.06" stroke="#FF0000" stroke-width="1.1"/>
<line x1="1021.2" y1="743.28" x2="1030.4" y2="752.48" stroke="#FF0000" stroke-width="1.1"/>
<line x1="1021.2" y1="752.48" x2="1030.4" y2="743.28" stroke="#FF0000" stroke-width="1.1"/>
<line x1="1021.2" y1="754.5" x2="1030.4" y2="763.7" stroke="#FF0000" stroke-width="1.1"/>
<line x1="1021.2" y1="763.7" x2="1030.4" y2="754.5" stroke="#FF0000" stroke-width="1.1"/>
<line x1="1021.2" y1="765.72" x2="1030.4" y2="774.92" stroke="#FF0000" stroke-width="1.1"/>
<line x1="1021.2" y1="774.92" x2="1030.4" y2="765.72" stroke="#FF0000" stroke-width="1.1"/>
<line x1="1026.2" y1="534.5" x2="1082.4" y2="534.5" stroke="#000080" stroke-width="1.2"/>
<circle cx="1082.7" cy="534.5" r="1.6" fill="#000080" stroke="none" stroke-width="0"/>
<text x="1088.2" y="538.6" font-size="10" fill="#0b3a70" stroke="#0b3a70" stroke-width="0.2">GPIO01</text>
<text x="1026.7" y="532.5" font-size="10" fill="#800000" stroke="#800000" stroke-width="0.2">GPIO01</text>
<line x1="1026.2" y1="545.72" x2="1082.4" y2="545.72" stroke="#000080" stroke-width="1.2"/>
<circle cx="1082.7" cy="545.72" r="1.6" fill="#000080" stroke="none" stroke-width="0"/>
<text x="1088.2" y="549.82" font-size="10" fill="#0b3a70" stroke="#0b3a70" stroke-width="0.2">GPIO02</text>
<text x="1026.7" y="543.72" font-size="10" fill="#800000" stroke="#800000" stroke-width="0.2">GPIO02</text>
<line x1="1026.2" y1="556.94" x2="1082.4" y2="556.94" stroke="#000080" stroke-width="1.2"/>
<circle cx="1082.7" cy="556.94" r="1.6" fill="#000080" stroke="none" stroke-width="0"/>
<text x="1088.2" y="561.04" font-size="10" fill="#0b3a70" stroke="#0b3a70" stroke-width="0.2">GPIO04</text>
<text x="1026.7" y="554.94" font-size="10" fill="#800000" stroke="#800000" stroke-width="0.2">GPIO04</text>
<line x1="1026.2" y1="568.16" x2="1082.4" y2="568.16" stroke="#000080" stroke-width="1.2"/>
<circle cx="1082.7" cy="568.16" r="1.6" fill="#000080" stroke="none" stroke-width="0"/>
<text x="1088.2" y="572.26" font-size="10" fill="#0b3a70" stroke="#0b3a70" stroke-width="0.2">GPIO05</text>
<text x="1026.7" y="566.16" font-size="10" fill="#800000" stroke="#800000" stroke-width="0.2">GPIO05</text>
<line x1="1026.2" y1="579.38" x2="1082.4" y2="579.38" stroke="#000080" stroke-width="1.2"/>
<circle cx="1082.7" cy="579.38" r="1.6" fill="#000080" stroke="none" stroke-width="0"/>
<text x="1088.2" y="583.48" font-size="10" fill="#0b3a70" stroke="#0b3a70" stroke-width="0.2">GPIO06</text>
<text x="1026.7" y="577.38" font-size="10" fill="#800000" stroke="#800000" stroke-width="0.2">GPIO06</text>
<line x1="1026.2" y1="590.6" x2="1082.4" y2="590.6" stroke="#000080" stroke-width="1.2"/>
<circle cx="1082.7" cy="590.6" r="1.6" fill="#000080" stroke="none" stroke-width="0"/>
<text x="1088.2" y="594.7" font-size="10" fill="#0b3a70" stroke="#0b3a70" stroke-width="0.2">GPIO07</text>
<text x="1026.7" y="588.6" font-size="10" fill="#800000" stroke="#800000" stroke-width="0.2">GPIO07</text>
<line x1="1026.2" y1="601.82" x2="1082.4" y2="601.82" stroke="#000080" stroke-width="1.2"/>
<circle cx="1082.7" cy="601.82" r="1.6" fill="#000080" stroke="none" stroke-width="0"/>
<text x="1088.2" y="605.92" font-size="10" fill="#0b3a70" stroke="#0b3a70" stroke-width="0.2">GPIO08</text>
<text x="1026.7" y="599.82" font-size="10" fill="#800000" stroke="#800000" stroke-width="0.2">GPIO08</text>
<line x1="1026.2" y1="613.04" x2="1082.4" y2="613.04" stroke="#000080" stroke-width="1.2"/>
<circle cx="1082.7" cy="613.04" r="1.6" fill="#000080" stroke="none" stroke-width="0"/>
<text x="1088.2" y="617.14" font-size="10" fill="#0b3a70" stroke="#0b3a70" stroke-width="0.2">GPIO09</text>
<text x="1026.7" y="612.04" font-size="10" fill="#800000" stroke="#800000" stroke-width="0.2">RESET</text>
<line x1="1026.2" y1="624.26" x2="1082.4" y2="624.26" stroke="#000080" stroke-width="1.2"/>
<circle cx="1082.7" cy="624.26" r="1.6" fill="#000080" stroke="none" stroke-width="0"/>
<text x="1088.2" y="629.06" font-size="10" fill="#0b3a70" stroke="#0b3a70" stroke-width="0.2">GPIO10</text>
<text x="1028.7" y="623.26" font-size="10" fill="#800000" stroke="#800000" stroke-width="0.2">START</text>
<line x1="1026.2" y1="635.48" x2="1082.4" y2="635.48" stroke="#000080" stroke-width="1.2"/>
<circle cx="1082.7" cy="635.48" r="1.6" fill="#000080" stroke="none" stroke-width="0"/>
<text x="1088.2" y="640.28" font-size="10" fill="#0b3a70" stroke="#0b3a70" stroke-width="0.2">GPIO11</text>
<line x1="1026.2" y1="646.7" x2="1082.4" y2="646.7" stroke="#000080" stroke-width="1.2"/>
<circle cx="1082.7" cy="646.7" r="1.6" fill="#000080" stroke="none" stroke-width="0"/>
<text x="1088.2" y="651.5" font-size="10" fill="#0b3a70" stroke="#0b3a70" stroke-width="0.2">GPIO12</text>
<line x1="1026.2" y1="657.92" x2="1082.4" y2="657.92" stroke="#000080" stroke-width="1.2"/>
<circle cx="1082.7" cy="657.92" r="1.6" fill="#000080" stroke="none" stroke-width="0"/>
<text x="1088.2" y="662.72" font-size="10" fill="#0b3a70" stroke="#0b3a70" stroke-width="0.2">GPIO13</text>
<line x1="1026.2" y1="669.14" x2="1082.4" y2="669.14" stroke="#000080" stroke-width="1.2"/>
<circle cx="1082.7" cy="669.14" r="1.6" fill="#000080" stroke="none" stroke-width="0"/>
<text x="1088.2" y="673.94" font-size="10" fill="#0b3a70" stroke="#0b3a70" stroke-width="0.2">GPIO14</text>
<text x="1026.7" y="667.84" font-size="10" fill="#800000" stroke="#800000" stroke-width="0.2">DRDY</text>
<line x1="1026.2" y1="680.36" x2="1082.4" y2="680.36" stroke="#000080" stroke-width="1.2"/>
<circle cx="1082.7" cy="680.36" r="1.6" fill="#000080" stroke="none" stroke-width="0"/>
<text x="1088.2" y="685.16" font-size="10" fill="#0b3a70" stroke="#0b3a70" stroke-width="0.2">GPIO15</text>
<text x="1026.7" y="679.06" font-size="10" fill="#800000" stroke="#800000" stroke-width="0.2">GPIO15</text>
<line x1="1026.2" y1="691.58" x2="1082.4" y2="691.58" stroke="#000080" stroke-width="1.2"/>
<circle cx="1082.7" cy="691.58" r="1.6" fill="#000080" stroke="none" stroke-width="0"/>
<text x="1088.2" y="696.38" font-size="10" fill="#0b3a70" stroke="#0b3a70" stroke-width="0.2">GPIO16</text>
<text x="1026.7" y="690.28" font-size="10" fill="#800000" stroke="#800000" stroke-width="0.2">GPIO16</text>
<line x1="1026.2" y1="702.8" x2="1082.4" y2="702.8" stroke="#000080" stroke-width="1.2"/>
<circle cx="1082.7" cy="702.8" r="1.6" fill="#000080" stroke="none" stroke-width="0"/>
<text x="1088.2" y="707.6" font-size="10" fill="#0b3a70" stroke="#0b3a70" stroke-width="0.2">GPIO17</text>
<text x="1026.7" y="701.5" font-size="10" fill="#800000" stroke="#800000" stroke-width="0.2">GPIO17</text>
<line x1="1026.2" y1="714.02" x2="1082.4" y2="714.02" stroke="#000080" stroke-width="1.2"/>
<circle cx="1082.7" cy="714.02" r="1.6" fill="#000080" stroke="none" stroke-width="0"/>
<text x="1088.2" y="718.82" font-size="10" fill="#0b3a70" stroke="#0b3a70" stroke-width="0.2">GPIO18</text>
<text x="1026.7" y="712.72" font-size="10" fill="#800000" stroke="#800000" stroke-width="0.2">GPIO18</text>
<line x1="1026.2" y1="725.24" x2="1082.4" y2="725.24" stroke="#000080" stroke-width="1.2"/>
<circle cx="1082.7" cy="725.24" r="1.6" fill="#000080" stroke="none" stroke-width="0"/>
<text x="1088.2" y="730.04" font-size="10" fill="#0b3a70" stroke="#0b3a70" stroke-width="0.2">GPIO21</text>
<text x="1026.7" y="723.94" font-size="10" fill="#800000" stroke="#800000" stroke-width="0.2">ADC_MISO</text>
<line x1="1026.2" y1="736.46" x2="1082.4" y2="736.46" stroke="#000080" stroke-width="1.2"/>
<circle cx="1082.7" cy="736.46" r="1.6" fill="#000080" stroke="none" stroke-width="0"/>
<text x="1088.2" y="741.26" font-size="10" fill="#0b3a70" stroke="#0b3a70" stroke-width="0.2">GPIO35</text>
<text x="1026.7" y="735.16" font-size="10" fill="#800000" stroke="#800000" stroke-width="0.2">GPIO35</text>
<line x1="1026.2" y1="747.68" x2="1082.4" y2="747.68" stroke="#000080" stroke-width="1.2"/>
<circle cx="1082.7" cy="747.68" r="1.6" fill="#000080" stroke="none" stroke-width="0"/>
<text x="1088.2" y="752.48" font-size="10" fill="#0b3a70" stroke="#0b3a70" stroke-width="0.2">GPIO36</text>
<text x="1026.7" y="746.38" font-size="10" fill="#800000" stroke="#800000" stroke-width="0.2">GPIO36</text>
<line x1="1026.2" y1="758.9" x2="1082.4" y2="758.9" stroke="#000080" stroke-width="1.2"/>
<circle cx="1082.7" cy="758.9" r="1.6" fill="#000080" stroke="none" stroke-width="0"/>
<text x="1088.2" y="763.7" font-size="10" fill="#0b3a70" stroke="#0b3a70" stroke-width="0.2">GPIO47</text>
<text x="1026.7" y="757.6" font-size="10" fill="#800000" stroke="#800000" stroke-width="0.2">GPIO47</text>
<line x1="1026.2" y1="770.12" x2="1082.4" y2="770.12" stroke="#000080" stroke-width="1.2"/>
<circle cx="1082.7" cy="770.12" r="1.6" fill="#000080" stroke="none" stroke-width="0"/>
<text x="1088.2" y="774.92" font-size="10" fill="#0b3a70" stroke="#0b3a70" stroke-width="0.2">GPIO48</text>
<text x="1026.7" y="768.82" font-size="10" fill="#800000" stroke="#800000" stroke-width="0.2">GPIO48</text>
<line x1="908.1" y1="635.48" x2="970" y2="635.48" stroke="#000080" stroke-width="1.2"/>
<line x1="970" y1="635.48" x2="981.2" y2="635.48" stroke="#000000" stroke-width="1.1"/>
<polyline points="981.2,635.48 984.3,632.18 991.2,638.78 998.1,632.18 1005,638.78 1011.9,632.18 1015.1,635.48" fill="none" stroke="#0000FF" stroke-width="1.3" stroke-linejoin="miter"/>
<line x1="1015.1" y1="635.48" x2="1026.3" y2="635.48" stroke="#000000" stroke-width="1.1"/>
<text x="970.8" y="632.68" font-size="9" fill="#000000" font-family="Liberation Sans">1</text>
<text x="1024.3" y="632.68" font-size="9" fill="#000000" font-family="Liberation Sans">2</text>
<text x="980.5" y="628.58" font-size="9" fill="#000080" font-family="Liberation Sans">R23</text>
<text x="980.5" y="649.28" font-size="9" fill="#000080" font-family="Liberation Sans">0</text>
<text x="908.8" y="633.78" font-size="10" fill="#800000" stroke="#800000" stroke-width="0.2">ADC_CS</text>
<line x1="908.1" y1="646.7" x2="970" y2="646.7" stroke="#000080" stroke-width="1.2"/>
<line x1="970" y1="646.7" x2="981.2" y2="646.7" stroke="#000000" stroke-width="1.1"/>
<polyline points="981.2,646.7 984.3,643.4 991.2,650 998.1,643.4 1005,650 1011.9,643.4 1015.1,646.7" fill="none" stroke="#0000FF" stroke-width="1.3" stroke-linejoin="miter"/>
<line x1="1015.1" y1="646.7" x2="1026.3" y2="646.7" stroke="#000000" stroke-width="1.1"/>
<text x="970.8" y="643.9" font-size="9" fill="#000000" font-family="Liberation Sans">1</text>
<text x="1024.3" y="643.9" font-size="9" fill="#000000" font-family="Liberation Sans">2</text>
<text x="980.5" y="639.8" font-size="9" fill="#000080" font-family="Liberation Sans">R24</text>
<text x="980.5" y="660.5" font-size="9" fill="#000080" font-family="Liberation Sans">0</text>
<text x="908.8" y="645" font-size="10" fill="#800000" stroke="#800000" stroke-width="0.2">ADC_SCLK</text>
<line x1="908.1" y1="657.92" x2="970" y2="657.92" stroke="#000080" stroke-width="1.2"/>
<line x1="970" y1="657.92" x2="981.2" y2="657.92" stroke="#000000" stroke-width="1.1"/>
<polyline points="981.2,657.92 984.3,654.62 991.2,661.22 998.1,654.62 1005,661.22 1011.9,654.62 1015.1,657.92" fill="none" stroke="#0000FF" stroke-width="1.3" stroke-linejoin="miter"/>
<line x1="1015.1" y1="657.92" x2="1026.3" y2="657.92" stroke="#000000" stroke-width="1.1"/>
<text x="970.8" y="655.12" font-size="9" fill="#000000" font-family="Liberation Sans">1</text>
<text x="1024.3" y="655.12" font-size="9" fill="#000000" font-family="Liberation Sans">2</text>
<text x="980.5" y="651.02" font-size="9" fill="#000080" font-family="Liberation Sans">R25</text>
<text x="980.5" y="671.72" font-size="9" fill="#000080" font-family="Liberation Sans">0</text>
<text x="908.8" y="656.22" font-size="10" fill="#800000" stroke="#800000" stroke-width="0.2">ADC_MOSI</text>
<rect x="1200.4" y="556.6" width="174.1" height="101.1" fill="#80FF80" stroke="#800000" stroke-width="1.15"/>
<text x="1200.9" y="543.9" font-size="10" fill="#000080" stroke="#000080" stroke-width="0.2">Compute Block</text>
<text x="1200.9" y="554.9" font-size="10" fill="#000080" stroke="#000080" stroke-width="0.2">Compute</text>
<line x1="1138.8" y1="601.75" x2="1202" y2="601.75" stroke="#c4d2f8" stroke-width="5.7" stroke-linecap="round"/>
<line x1="1139" y1="601.8" x2="1202" y2="601.8" stroke="#b6c6f2" stroke-width="1.2"/>
<line x1="1140.1" y1="599.1" x2="1145.9" y2="604.4" stroke="#a6b3e0" stroke-width="0.9"/>
<line x1="1151.35" y1="599.1" x2="1157.15" y2="604.4" stroke="#a6b3e0" stroke-width="0.9"/>
<line x1="1162.6" y1="599.1" x2="1168.4" y2="604.4" stroke="#a6b3e0" stroke-width="0.9"/>
<line x1="1173.85" y1="599.1" x2="1179.65" y2="604.4" stroke="#a6b3e0" stroke-width="0.9"/>
<line x1="1185.1" y1="599.1" x2="1190.9" y2="604.4" stroke="#a6b3e0" stroke-width="0.9"/>
<polygon points="1200.4,563.5 1217.7,563.5 1217.7,572.5 1200.4,572.5" fill="#FFFF80" stroke="#800000" stroke-width="1.1" stroke-linejoin="miter"/>
<text x="1223.3" y="572.5" font-size="10" fill="#800000" stroke="#800000" stroke-width="0.2">3V3_IN</text>
<polygon points="1200.4,580.3 1217.7,580.3 1217.7,589.3 1200.4,589.3" fill="#FFFF80" stroke="#800000" stroke-width="1.1" stroke-linejoin="miter"/>
<text x="1223.3" y="589.3" font-size="10" fill="#800000" stroke="#800000" stroke-width="0.2">USB_5V</text>
<polygon points="1201.6,601.8 1205.2,597 1213.4,597 1217.6,601.8 1213.4,606.8 1205.2,606.8" fill="#d6e2fc" stroke="#8f9bbb" stroke-width="1"/>
<text x="1223.3" y="606" font-size="10" fill="#800000" stroke="#800000" stroke-width="0.2">GPIO</text>
<polygon points="1200.4,624.4 1205.4,619.9 1212.7,619.9 1217.7,624.4 1212.7,628.9 1205.4,628.9" fill="#FFFF80" stroke="#800000" stroke-width="1.1" stroke-linejoin="miter"/>
<text x="1223.3" y="628.9" font-size="10" fill="#800000" stroke="#800000" stroke-width="0.2">ETH_MOSI</text>
<polygon points="1200.4,635.5 1205.4,631 1212.7,631 1217.7,635.5 1212.7,640 1205.4,640" fill="#FFFF80" stroke="#800000" stroke-width="1.1" stroke-linejoin="miter"/>
<text x="1223.3" y="640" font-size="10" fill="#800000" stroke="#800000" stroke-width="0.2">ETH_MISO</text>
<polygon points="1200.4,642.1 1217.7,642.1 1217.7,651.1 1200.4,651.1" fill="#FFFF80" stroke="#800000" stroke-width="1.1" stroke-linejoin="miter"/>
<text x="1223.3" y="651.1" font-size="10" fill="#800000" stroke="#800000" stroke-width="0.2">ETH_SCLK</text>
<line x1="1195.2" y1="620" x2="1204.4" y2="629.2" stroke="#FF0000" stroke-width="1.1"/>
<line x1="1195.2" y1="629.2" x2="1204.4" y2="620" stroke="#FF0000" stroke-width="1.1"/>
<line x1="1195.2" y1="631.1" x2="1204.4" y2="640.3" stroke="#FF0000" stroke-width="1.1"/>
<line x1="1195.2" y1="640.3" x2="1204.4" y2="631.1" stroke="#FF0000" stroke-width="1.1"/>
<line x1="1195.2" y1="642.2" x2="1204.4" y2="651.4" stroke="#FF0000" stroke-width="1.1"/>
<line x1="1195.2" y1="651.4" x2="1204.4" y2="642.2" stroke="#FF0000" stroke-width="1.1"/>
<polygon points="1357.2,630.8 1374.5,630.8 1374.5,639.8 1357.2,639.8" fill="#FFFF80" stroke="#800000" stroke-width="1.1" stroke-linejoin="miter"/>
<text x="1351.6" y="639.8" font-size="10" fill="#800000" text-anchor="end" stroke="#800000" stroke-width="0.2">GND</text>
<polygon points="1357.2,642.1 1374.5,642.1 1374.5,651.1 1357.2,651.1" fill="#FFFF80" stroke="#800000" stroke-width="1.1" stroke-linejoin="miter"/>
<text x="1351.6" y="651.1" font-size="10" fill="#800000" text-anchor="end" stroke="#800000" stroke-width="0.2">CHASSIS_GND</text>
<line x1="1189.5" y1="568" x2="1200.4" y2="568" stroke="#800000" stroke-width="1.1"/>
<line x1="1189.5" y1="562.2" x2="1189.5" y2="573.8" stroke="#800000" stroke-width="1.1"/>
<text x="1187.5" y="571.9" font-size="10" fill="#800000" text-anchor="end" stroke="#800000" stroke-width="0.2">3V3</text>
<line x1="1161.1" y1="584.8" x2="1200.4" y2="584.8" stroke="#000080" stroke-width="1.2"/>
<text x="1161.1" y="583.5" font-size="10" fill="#800000" stroke="#800000" stroke-width="0.2">USB_5V</text>
<line x1="1374.5" y1="635.3" x2="1385.7" y2="635.3" stroke="#800000" stroke-width="1.1"/>
<line x1="1385.7" y1="623.9" x2="1385.7" y2="646.7" stroke="#800000" stroke-width="1.1"/>
<line x1="1389.1" y1="627.1" x2="1389.1" y2="643.5" stroke="#800000" stroke-width="1.1"/>
<line x1="1392.5" y1="630.7" x2="1392.5" y2="639.9" stroke="#800000" stroke-width="1.1"/>
<line x1="1395.9" y1="633.9" x2="1395.9" y2="636.7" stroke="#800000" stroke-width="1.1"/>
<text x="1399.3" y="639.8" font-size="10" fill="#800000" stroke="#800000" stroke-width="0.2">GND</text>
<line x1="1374.5" y1="646.6" x2="1408.5" y2="646.6" stroke="#000080" stroke-width="1.2"/>
<line x1="1408.5" y1="646" x2="1408.5" y2="652" stroke="#000080" stroke-width="1.2"/>
<line x1="1408.5" y1="652" x2="1408.5" y2="657.5" stroke="#800000" stroke-width="1.1"/>
<line x1="1397" y1="657.5" x2="1420" y2="657.5" stroke="#800000" stroke-width="1.1"/>
<line x1="1397" y1="657.5" x2="1391.3" y2="668.8" stroke="#800000" stroke-width="1.1"/>
<line x1="1408.5" y1="657.5" x2="1402.8" y2="668.8" stroke="#800000" stroke-width="1.1"/>
<line x1="1420" y1="657.5" x2="1414.3" y2="668.8" stroke="#800000" stroke-width="1.1"/>
<text x="1408.5" y="678.7" font-size="10" fill="#800000" text-anchor="middle" stroke="#800000" stroke-width="0.2">CHASSIS_GND</text>
<rect x="1482.2" y="556.5" width="134" height="56.1" fill="#80FF80" stroke="#800000" stroke-width="1.15"/>
<text x="1482.7" y="543.8" font-size="10" fill="#000080" stroke="#000080" stroke-width="0.2">Power Block</text>
<text x="1482.7" y="554.8" font-size="10" fill="#000080" stroke="#000080" stroke-width="0.2">Power</text>
<polygon points="1482.2,563.4 1499.5,563.4 1499.5,572.4 1482.2,572.4" fill="#FFFF80" stroke="#800000" stroke-width="1.1" stroke-linejoin="miter"/>
<text x="1505.1" y="572" font-size="10" fill="#800000" stroke="#800000" stroke-width="0.2">5V5_IN</text>
<polygon points="1482.2,574.7 1499.5,574.7 1499.5,583.7 1482.2,583.7" fill="#FFFF80" stroke="#800000" stroke-width="1.1" stroke-linejoin="miter"/>
<text x="1505.1" y="583.3" font-size="10" fill="#800000" stroke="#800000" stroke-width="0.2">USB_5V</text>
<polygon points="1482.2,586 1499.5,586 1499.5,595 1482.2,595" fill="#FFFF80" stroke="#800000" stroke-width="1.1" stroke-linejoin="miter"/>
<text x="1505.1" y="594.6" font-size="10" fill="#800000" stroke="#800000" stroke-width="0.2">5V</text>
<polygon points="1482.2,597.3 1499.5,597.3 1499.5,606.3 1482.2,606.3" fill="#FFFF80" stroke="#800000" stroke-width="1.1" stroke-linejoin="miter"/>
<text x="1505.1" y="605.9" font-size="10" fill="#800000" stroke="#800000" stroke-width="0.2">3V3</text>
<polygon points="1598.9,586 1616.2,586 1616.2,595 1598.9,595" fill="#FFFF80" stroke="#800000" stroke-width="1.1" stroke-linejoin="miter"/>
<text x="1593.3" y="594.6" font-size="10" fill="#800000" text-anchor="end" stroke="#800000" stroke-width="0.2">GND</text>
<polygon points="1598.9,597.3 1616.2,597.3 1616.2,606.3 1598.9,606.3" fill="#FFFF80" stroke="#800000" stroke-width="1.1" stroke-linejoin="miter"/>
<text x="1593.3" y="605.9" font-size="10" fill="#800000" text-anchor="end" stroke="#800000" stroke-width="0.2">CHASSIS_GND</text>
<line x1="1471.3" y1="567.9" x2="1482.2" y2="567.9" stroke="#800000" stroke-width="1.1"/>
<line x1="1471.3" y1="562.1" x2="1471.3" y2="573.7" stroke="#800000" stroke-width="1.1"/>
<text x="1469.3" y="571.8" font-size="10" fill="#800000" text-anchor="end" stroke="#800000" stroke-width="0.2">5V5_IN</text>
<line x1="1471.3" y1="590.5" x2="1482.2" y2="590.5" stroke="#800000" stroke-width="1.1"/>
<line x1="1471.3" y1="584.7" x2="1471.3" y2="596.3" stroke="#800000" stroke-width="1.1"/>
<text x="1469.3" y="594.4" font-size="10" fill="#800000" text-anchor="end" stroke="#800000" stroke-width="0.2">5V</text>
<line x1="1471.3" y1="601.8" x2="1482.2" y2="601.8" stroke="#800000" stroke-width="1.1"/>
<line x1="1471.3" y1="596" x2="1471.3" y2="607.6" stroke="#800000" stroke-width="1.1"/>
<text x="1469.3" y="605.7" font-size="10" fill="#800000" text-anchor="end" stroke="#800000" stroke-width="0.2">3V3</text>
<line x1="1397.2" y1="579.5" x2="1482.2" y2="579.5" stroke="#000080" stroke-width="1.2"/>
<text x="1397.2" y="578" font-size="10" fill="#800000" stroke="#800000" stroke-width="0.2">USB_5V</text>
<line x1="1616.2" y1="590.5" x2="1627.4" y2="590.5" stroke="#800000" stroke-width="1.1"/>
<line x1="1627.4" y1="579.1" x2="1627.4" y2="601.9" stroke="#800000" stroke-width="1.1"/>
<line x1="1630.8" y1="582.3" x2="1630.8" y2="598.7" stroke="#800000" stroke-width="1.1"/>
<line x1="1634.2" y1="585.9" x2="1634.2" y2="595.1" stroke="#800000" stroke-width="1.1"/>
<line x1="1637.6" y1="589.1" x2="1637.6" y2="591.9" stroke="#800000" stroke-width="1.1"/>
<text x="1641" y="594.5" font-size="10" fill="#800000" stroke="#800000" stroke-width="0.2">GND</text>
<line x1="1616.2" y1="601.8" x2="1644" y2="601.8" stroke="#000080" stroke-width="1.2"/>
<line x1="1644" y1="601.2" x2="1644" y2="607" stroke="#000080" stroke-width="1.2"/>
<line x1="1644" y1="607" x2="1644" y2="612.6" stroke="#800000" stroke-width="1.1"/>
<line x1="1632.5" y1="612.6" x2="1655.5" y2="612.6" stroke="#800000" stroke-width="1.1"/>
<line x1="1632.5" y1="612.6" x2="1626.8" y2="623.9" stroke="#800000" stroke-width="1.1"/>
<line x1="1644" y1="612.6" x2="1638.3" y2="623.9" stroke="#800000" stroke-width="1.1"/>
<line x1="1655.5" y1="612.6" x2="1649.8" y2="623.9" stroke="#800000" stroke-width="1.1"/>
<text x="1644" y="633.8" font-size="10" fill="#800000" text-anchor="middle" stroke="#800000" stroke-width="0.2">CHASSIS_GND</text>
<rect x="1700.2" y="562.7" width="56.3" height="32.9" fill="#FFFFB0" stroke="#800000" stroke-width="1.15"/>
<text x="1700.9" y="560.8" font-size="10" fill="#000080" stroke="#000080" stroke-width="0.2">PS1</text>
<text x="1700.9" y="605.6" font-size="10" fill="#000080" textLength="50" lengthAdjust="spacingAndGlyphs" stroke="#000080" stroke-width="0.2">XT60PW-M</text>
<text x="1708.1" y="577.6" font-size="10" fill="#000000" stroke="#000000" stroke-width="0.2">MH1</text>
<text x="1708.1" y="588.6" font-size="10" fill="#000000" stroke="#000000" stroke-width="0.2">MH2</text>
<text x="1743.2" y="577.4" font-size="10" fill="#000000" stroke="#000000" stroke-width="0.2">+</text>
<text x="1745.8" y="588.4" font-size="10" fill="#000000" stroke="#000000" stroke-width="0.2">-</text>
<line x1="1677.1" y1="573.2" x2="1700.2" y2="573.2" stroke="#000000" stroke-width="1.1"/>
<text x="1671.2" y="571.7" font-size="10" fill="#000000" stroke="#000000" stroke-width="0.2">MH1</text>
<line x1="1672.8" y1="568.6" x2="1682.4" y2="578.2" stroke="#FF0000" stroke-width="1.1"/>
<line x1="1672.8" y1="578.2" x2="1682.4" y2="568.6" stroke="#FF0000" stroke-width="1.1"/>
<line x1="1677.1" y1="584.4" x2="1700.2" y2="584.4" stroke="#000000" stroke-width="1.1"/>
<text x="1671.2" y="582.9" font-size="10" fill="#000000" stroke="#000000" stroke-width="0.2">MH2</text>
<line x1="1672.8" y1="579.8" x2="1682.4" y2="589.4" stroke="#FF0000" stroke-width="1.1"/>
<line x1="1672.8" y1="589.4" x2="1682.4" y2="579.8" stroke="#FF0000" stroke-width="1.1"/>
<line x1="1756.5" y1="573.2" x2="1778.6" y2="573.2" stroke="#000000" stroke-width="1.1"/>
<line x1="1756.5" y1="584.4" x2="1778.6" y2="584.4" stroke="#000000" stroke-width="1.1"/>
<text x="1766.4" y="571.6" font-size="10" fill="#000000" stroke="#000000" stroke-width="0.2">1</text>
<text x="1766" y="583.4" font-size="10" fill="#000000" stroke="#000000" stroke-width="0.2">2</text>
<line x1="1778.6" y1="573.2" x2="1830" y2="573.2" stroke="#000080" stroke-width="1.2"/>
<line x1="1830" y1="573.2" x2="1840.6" y2="573.2" stroke="#800000" stroke-width="1.1"/>
<line x1="1840.6" y1="567.4" x2="1840.6" y2="579.4" stroke="#800000" stroke-width="1.1"/>
<text x="1843.2" y="577.6" font-size="10" fill="#800000" stroke="#800000" stroke-width="0.2">HV_IN</text>
<circle cx="1812.5" cy="573.2" r="2.4" fill="#000080" stroke="none" stroke-width="0"/>
<line x1="1778.6" y1="584.4" x2="1778.6" y2="595.6" stroke="#800000" stroke-width="1.1"/>
<line x1="1767" y1="595.6" x2="1790.2" y2="595.6" stroke="#800000" stroke-width="1.1"/>
<line x1="1770.6" y1="599" x2="1786.6" y2="599" stroke="#800000" stroke-width="1.1"/>
<line x1="1774" y1="602.4" x2="1783.2" y2="602.4" stroke="#800000" stroke-width="1.1"/>
<line x1="1777.2" y1="605.8" x2="1780" y2="605.8" stroke="#800000" stroke-width="1.1"/>
<text x="1778.6" y="616.8" font-size="10" fill="#800000" text-anchor="middle" stroke="#800000" stroke-width="0.2">GND</text>
<line x1="1812.5" y1="573.2" x2="1812.5" y2="596" stroke="#000000" stroke-width="1.1"/>
<polyline points="1801,590.1 1807.6,596 1817.5,596 1824.1,601.3" fill="none" stroke="#0000FF" stroke-width="1.3"/>
<polygon points="1812.5,596 1801,618.4 1824.1,618.4" fill="none" stroke="#0000FF" stroke-width="1.3"/>
<line x1="1812.5" y1="618.4" x2="1812.5" y2="640.8" stroke="#000000" stroke-width="1.1"/>
<line x1="1812.5" y1="640.8" x2="1812.5" y2="652" stroke="#800000" stroke-width="1.1"/>
<line x1="1801" y1="652" x2="1824" y2="652" stroke="#800000" stroke-width="1.1"/>
<line x1="1801" y1="652" x2="1795.3" y2="663.3" stroke="#800000" stroke-width="1.1"/>
<line x1="1812.5" y1="652" x2="1806.8" y2="663.3" stroke="#800000" stroke-width="1.1"/>
<line x1="1824" y1="652" x2="1818.3" y2="663.3" stroke="#800000" stroke-width="1.1"/>
<text x="1812.5" y="673.2" font-size="10" fill="#800000" text-anchor="middle" stroke="#800000" stroke-width="0.2">CHASSIS_GND</text>
<text x="1809.1" y="586.6" font-size="9" fill="#000000" font-family="Liberation Sans" transform="rotate(-90 1809.1 586.6)">1</text>
<text x="1809.1" y="632.8" font-size="9" fill="#000000" font-family="Liberation Sans" transform="rotate(-90 1809.1 632.8)">2</text>
<text x="1825.1" y="598.7" font-size="10" fill="#000080" stroke="#000080" stroke-width="0.2">D1</text>
<text x="1825.1" y="610.9" font-size="10" fill="#000080" textLength="48.4" lengthAdjust="spacingAndGlyphs" stroke="#000080" stroke-width="0.2">SMBJ24CA</text>
<line x1="1172.1" y1="708.2" x2="1234.8" y2="708.2" stroke="#000080" stroke-width="1.2"/>
<line x1="1234.8" y1="708.2" x2="1256.6" y2="708.2" stroke="#000000" stroke-width="1.1"/>
<rect x="1256.6" y="697" width="23" height="22.6" fill="#FFFFB0" stroke="#800000" stroke-width="1.15"/>
<line x1="1172.1" y1="741.7" x2="1234.8" y2="741.7" stroke="#000080" stroke-width="1.2"/>
<line x1="1234.8" y1="741.7" x2="1256.6" y2="741.7" stroke="#000000" stroke-width="1.1"/>
<rect x="1256.6" y="730.5" width="23" height="22.6" fill="#FFFFB0" stroke="#800000" stroke-width="1.15"/>
<line x1="1172.1" y1="770.1" x2="1234.8" y2="770.1" stroke="#000080" stroke-width="1.2"/>
<line x1="1234.8" y1="770.1" x2="1256.6" y2="770.1" stroke="#000000" stroke-width="1.1"/>
<rect x="1256.6" y="758.9" width="23" height="22.6" fill="#FFFFB0" stroke="#800000" stroke-width="1.15"/>
<line x1="1374.3" y1="702.5" x2="1425.7" y2="702.5" stroke="#000080" stroke-width="1.2"/>
<line x1="1425.7" y1="702.5" x2="1447.5" y2="702.5" stroke="#000000" stroke-width="1.1"/>
<rect x="1447.5" y="691.3" width="23" height="22.6" fill="#FFFFB0" stroke="#800000" stroke-width="1.15"/>
<line x1="1374.3" y1="747.7" x2="1431.1" y2="747.7" stroke="#000080" stroke-width="1.2"/>
<line x1="1431.1" y1="747.7" x2="1452.9" y2="747.7" stroke="#000000" stroke-width="1.1"/>
<rect x="1452.9" y="736.5" width="23" height="22.6" fill="#FFFFB0" stroke="#800000" stroke-width="1.15"/>
<text x="1266.8" y="712.6" font-size="10" fill="#000000" text-anchor="middle" stroke="#000000" stroke-width="0.2">1</text>
<text x="1244.5" y="707" font-size="10" fill="#000000" stroke="#000000" stroke-width="0.2">1</text>
<text x="1172.8" y="707" font-size="10" fill="#800000" stroke="#800000" stroke-width="0.2">ADC_MOSI</text>
<text x="1257.4" y="695.6" font-size="10" fill="#000080" stroke="#000080" stroke-width="0.2">J15</text>
<text x="1257.4" y="729.8" font-size="10" fill="#000080" stroke="#000080" stroke-width="0.2">5001</text>
<text x="1266.8" y="746.1" font-size="10" fill="#000000" text-anchor="middle" stroke="#000000" stroke-width="0.2">1</text>
<text x="1244.5" y="740.5" font-size="10" fill="#000000" stroke="#000000" stroke-width="0.2">1</text>
<text x="1172.8" y="740.5" font-size="10" fill="#800000" stroke="#800000" stroke-width="0.2">ADC_MISO</text>
<text x="1257.4" y="729.1" font-size="10" fill="#000080" stroke="#000080" stroke-width="0.2">J16</text>
<text x="1257.4" y="763.3" font-size="10" fill="#000080" stroke="#000080" stroke-width="0.2">5001</text>
<text x="1266.8" y="774.5" font-size="10" fill="#000000" text-anchor="middle" stroke="#000000" stroke-width="0.2">1</text>
<text x="1244.5" y="768.9" font-size="10" fill="#000000" stroke="#000000" stroke-width="0.2">1</text>
<text x="1172.8" y="768.9" font-size="10" fill="#800000" stroke="#800000" stroke-width="0.2">ADC_SCLK</text>
<text x="1257.4" y="757.5" font-size="10" fill="#000080" stroke="#000080" stroke-width="0.2">J18</text>
<text x="1257.4" y="791.7" font-size="10" fill="#000080" stroke="#000080" stroke-width="0.2">5001</text>
<text x="1457.7" y="706.9" font-size="10" fill="#000000" text-anchor="middle" stroke="#000000" stroke-width="0.2">1</text>
<text x="1435.4" y="701.3" font-size="10" fill="#000000" stroke="#000000" stroke-width="0.2">1</text>
<text x="1374.3" y="701.3" font-size="10" fill="#800000" stroke="#800000" stroke-width="0.2">DRDY</text>
<text x="1448.3" y="689.9" font-size="10" fill="#000080" stroke="#000080" stroke-width="0.2">J14</text>
<text x="1448.3" y="724.1" font-size="10" fill="#000080" stroke="#000080" stroke-width="0.2">5001</text>
<text x="1463.1" y="752.1" font-size="10" fill="#000000" text-anchor="middle" stroke="#000000" stroke-width="0.2">1</text>
<text x="1440.8" y="746.5" font-size="10" fill="#000000" stroke="#000000" stroke-width="0.2">1</text>
<text x="1376" y="746.5" font-size="10" fill="#800000" stroke="#800000" stroke-width="0.2">ADC_CS</text>
<text x="1453.7" y="735.1" font-size="10" fill="#000080" stroke="#000080" stroke-width="0.2">J17</text>
<text x="1453.7" y="769.3" font-size="10" fill="#000080" stroke="#000080" stroke-width="0.2">5001</text>
<line x1="1520.3" y1="747.4" x2="1565.2" y2="747.4" stroke="#000080" stroke-width="1.2"/>
<text x="1520.7" y="745.5" font-size="10" fill="#800000" stroke="#800000" stroke-width="0.2">GPIO16</text>
<line x1="1565.2" y1="747.4" x2="1576.4" y2="747.4" stroke="#000000" stroke-width="1.1"/>
<polyline points="1576.4,747.4 1579.5,744.1 1586.4,750.7 1593.3,744.1 1600.2,750.7 1607.1,744.1 1610.3,747.4" fill="none" stroke="#0000FF" stroke-width="1.3" stroke-linejoin="miter"/>
<line x1="1610.3" y1="747.4" x2="1621.5" y2="747.4" stroke="#000000" stroke-width="1.1"/>
<text x="1566" y="744.6" font-size="9" fill="#000000" font-family="Liberation Sans">1</text>
<text x="1619.3" y="744.6" font-size="9" fill="#000000" font-family="Liberation Sans">2</text>
<text x="1575.9" y="740.5" font-size="9" fill="#000080" font-family="Liberation Sans">R10</text>
<text x="1575.9" y="761.2" font-size="9" fill="#000080" font-family="Liberation Sans">470</text>
<line x1="1621.5" y1="747.4" x2="1633" y2="747.4" stroke="#000080" stroke-width="1.2"/>
<line x1="1633" y1="747.4" x2="1643.7" y2="747.4" stroke="#000000" stroke-width="1.1"/>
<polygon points="1643.7,741.6 1643.7,753.2 1655.4,747.4" fill="#ffff00" stroke="#000000" stroke-width="1.1"/>
<line x1="1655.6" y1="741.5" x2="1655.6" y2="753.5" stroke="#000000" stroke-width="1.1"/>
<line x1="1655.6" y1="747.4" x2="1677" y2="747.4" stroke="#000000" stroke-width="1.1"/>
<line x1="1677" y1="747.4" x2="1688.9" y2="747.4" stroke="#800000" stroke-width="1.1"/>
<line x1="1688.9" y1="736" x2="1688.9" y2="758.8" stroke="#800000" stroke-width="1.1"/>
<line x1="1692.3" y1="739.2" x2="1692.3" y2="755.6" stroke="#800000" stroke-width="1.1"/>
<line x1="1695.7" y1="742.8" x2="1695.7" y2="752" stroke="#800000" stroke-width="1.1"/>
<line x1="1699.1" y1="746" x2="1699.1" y2="748.8" stroke="#800000" stroke-width="1.1"/>
<text x="1702.6" y="751.4" font-size="10" fill="#800000" stroke="#800000" stroke-width="0.2">GND</text>
<text x="1643.3" y="736.9" font-size="9" fill="#000080" font-family="Liberation Sans">D6</text>
<text x="1643.3" y="763.7" font-size="10" fill="#000080" textLength="91.4" lengthAdjust="spacingAndGlyphs" stroke="#000080" stroke-width="0.2">LED_0603_YELLOW</text>
<polyline points="1657.6,742.6 1659,739.8 1660.6,742.2" fill="none" stroke="#e8e800" stroke-width="1"/>
<polyline points="1661.6,742.6 1663.2,739.8 1665,742" fill="none" stroke="#e8e800" stroke-width="1"/>
<rect x="448" y="820.6" width="224.9" height="280.4" fill="none" stroke="#1a1a1a" stroke-width="1.3"/>
<text x="465.1" y="851" font-size="23.5" fill="#000080" textLength="153.7" lengthAdjust="spacingAndGlyphs" stroke="#000080" stroke-width="0.3">Mounting Holes</text>
<circle cx="492.9" cy="921.4" r="11.2" fill="none" stroke="#0000FF" stroke-width="1.4"/>
<circle cx="492.9" cy="921.4" r="5.5" fill="none" stroke="#0000FF" stroke-width="1.4"/>
<line x1="492.9" y1="933" x2="492.9" y2="943.8" stroke="#000000" stroke-width="1.1"/>
<line x1="484.3" y1="943.6" x2="489.1" y2="943.6" stroke="#000000" stroke-width="1.1"/>
<line x1="488.1" y1="939.2" x2="497.7" y2="948.8" stroke="#FF0000" stroke-width="1.1"/>
<line x1="488.1" y1="948.8" x2="497.7" y2="939.2" stroke="#FF0000" stroke-width="1.1"/>
<text x="481.8" y="907.4" font-size="9" fill="#000080" font-family="Liberation Sans">ST2</text>
<text x="481.8" y="885.6" font-size="9" fill="#000080" font-family="Liberation Sans">M3 Mounting Hole</text>
<circle cx="582.9" cy="921.4" r="11.2" fill="none" stroke="#0000FF" stroke-width="1.4"/>
<circle cx="582.9" cy="921.4" r="5.5" fill="none" stroke="#0000FF" stroke-width="1.4"/>
<line x1="582.9" y1="933" x2="582.9" y2="943.8" stroke="#000000" stroke-width="1.1"/>
<line x1="574.3" y1="943.6" x2="579.1" y2="943.6" stroke="#000000" stroke-width="1.1"/>
<line x1="578.1" y1="939.2" x2="587.7" y2="948.8" stroke="#FF0000" stroke-width="1.1"/>
<line x1="578.1" y1="948.8" x2="587.7" y2="939.2" stroke="#FF0000" stroke-width="1.1"/>
<text x="571.8" y="907.4" font-size="9" fill="#000080" font-family="Liberation Sans">ST3</text>
<text x="577.8" y="885.6" font-size="9" fill="#000080" font-family="Liberation Sans">M3 Mounting Hole</text>
<circle cx="492.9" cy="1028.1" r="11.2" fill="none" stroke="#0000FF" stroke-width="1.4"/>
<circle cx="492.9" cy="1028.1" r="5.5" fill="none" stroke="#0000FF" stroke-width="1.4"/>
<line x1="492.9" y1="1039.7" x2="492.9" y2="1050.5" stroke="#000000" stroke-width="1.1"/>
<line x1="484.3" y1="1050.3" x2="489.1" y2="1050.3" stroke="#000000" stroke-width="1.1"/>
<line x1="488.1" y1="1045.9" x2="497.7" y2="1055.5" stroke="#FF0000" stroke-width="1.1"/>
<line x1="488.1" y1="1055.5" x2="497.7" y2="1045.9" stroke="#FF0000" stroke-width="1.1"/>
<text x="481.8" y="1014.5" font-size="9" fill="#000080" font-family="Liberation Sans">ST4</text>
<text x="481.8" y="991.4" font-size="9" fill="#000080" font-family="Liberation Sans">M3 Mounting Hole</text>
<circle cx="582.9" cy="1028.1" r="11.2" fill="none" stroke="#0000FF" stroke-width="1.4"/>
<circle cx="582.9" cy="1028.1" r="5.5" fill="none" stroke="#0000FF" stroke-width="1.4"/>
<line x1="582.9" y1="1039.7" x2="582.9" y2="1050.5" stroke="#000000" stroke-width="1.1"/>
<line x1="574.3" y1="1050.3" x2="579.1" y2="1050.3" stroke="#000000" stroke-width="1.1"/>
<line x1="578.1" y1="1045.9" x2="587.7" y2="1055.5" stroke="#FF0000" stroke-width="1.1"/>
<line x1="578.1" y1="1055.5" x2="587.7" y2="1045.9" stroke="#FF0000" stroke-width="1.1"/>
<text x="571.8" y="1014.5" font-size="9" fill="#000080" font-family="Liberation Sans">ST5</text>
<text x="577.8" y="991.4" font-size="9" fill="#000080" font-family="Liberation Sans">M3 Mounting Hole</text>
<rect x="689.3" y="820.6" width="191.4" height="156.6" fill="none" stroke="#1a1a1a" stroke-width="1.3"/>
<text x="707.1" y="851" font-size="23.5" fill="#000080" textLength="149.5" lengthAdjust="spacingAndGlyphs" stroke="#000080" stroke-width="0.3">Chassis Ground</text>
<text x="723.7" y="879.7" font-size="9" fill="#000080" font-family="Liberation Sans" textLength="111.5" lengthAdjust="spacingAndGlyphs">Chassis GND Ring Terminal</text>
<text x="779.7" y="890.5" font-size="9" fill="#000080" font-family="Liberation Sans">ST1</text>
<circle cx="790.6" cy="904.8" r="11.2" fill="none" stroke="#0000FF" stroke-width="1.4"/>
<circle cx="790.6" cy="904.8" r="5.5" fill="none" stroke="#0000FF" stroke-width="1.4"/>
<line x1="790.6" y1="916.4" x2="790.6" y2="927" stroke="#000000" stroke-width="1.1"/>
<line x1="790.6" y1="927" x2="790.6" y2="938.1" stroke="#800000" stroke-width="1.1"/>
<line x1="781" y1="926.4" x2="787.6" y2="926.4" stroke="#000000" stroke-width="1.1"/>
<line x1="779.1" y1="938.1" x2="802.1" y2="938.1" stroke="#800000" stroke-width="1.1"/>
<line x1="779.1" y1="938.1" x2="773.4" y2="949.4" stroke="#800000" stroke-width="1.1"/>
<line x1="790.6" y1="938.1" x2="784.9" y2="949.4" stroke="#800000" stroke-width="1.1"/>
<line x1="802.1" y1="938.1" x2="796.4" y2="949.4" stroke="#800000" stroke-width="1.1"/>
<text x="790.6" y="959.3" font-size="10" fill="#800000" text-anchor="middle" stroke="#800000" stroke-width="0.2">CHASSIS_GND</text>
<rect x="1329.7" y="1061.8" width="561.1" height="157.2" fill="none" stroke="#1a1a1a" stroke-width="1.3"/>
<line x1="1329.7" y1="1084.2" x2="1486.6" y2="1084.2" stroke="#1a1a1a" stroke-width="1.3"/>
<line x1="1329.7" y1="1101" x2="1486.6" y2="1101" stroke="#1a1a1a" stroke-width="1.3"/>
<line x1="1329.7" y1="1118" x2="1486.6" y2="1118" stroke="#1a1a1a" stroke-width="1.3"/>
<line x1="1329.7" y1="1135" x2="1486.6" y2="1135" stroke="#1a1a1a" stroke-width="1.3"/>
<line x1="1329.7" y1="1151.6" x2="1486.6" y2="1151.6" stroke="#1a1a1a" stroke-width="1.3"/>
<line x1="1329.7" y1="1168.5" x2="1486.6" y2="1168.5" stroke="#1a1a1a" stroke-width="1.3"/>
<line x1="1329.7" y1="1185.3" x2="1486.6" y2="1185.3" stroke="#1a1a1a" stroke-width="1.3"/>
<line x1="1329.7" y1="1202.2" x2="1890.8" y2="1202.2" stroke="#1a1a1a" stroke-width="1.3"/>
<line x1="1441.6" y1="1061.8" x2="1441.6" y2="1135" stroke="#1a1a1a" stroke-width="1.3"/>
<line x1="1486.6" y1="1061.8" x2="1486.6" y2="1219" stroke="#1a1a1a" stroke-width="1.3"/>
<line x1="1486.6" y1="1106.5" x2="1890.8" y2="1106.5" stroke="#1a1a1a" stroke-width="1.3"/>
<line x1="1486.6" y1="1123.3" x2="1890.8" y2="1123.3" stroke="#1a1a1a" stroke-width="1.3"/>
<line x1="1486.6" y1="1168.5" x2="1890.8" y2="1168.5" stroke="#1a1a1a" stroke-width="1.3"/>
<line x1="1565.6" y1="1061.8" x2="1565.6" y2="1106.5" stroke="#1a1a1a" stroke-width="1.3"/>
<line x1="1610.4" y1="1106.5" x2="1610.4" y2="1123.3" stroke="#1a1a1a" stroke-width="1.3"/>
<line x1="1734.6" y1="1106.5" x2="1734.6" y2="1123.3" stroke="#1a1a1a" stroke-width="1.3"/>
<line x1="1520.4" y1="1168.5" x2="1520.4" y2="1202.2" stroke="#1a1a1a" stroke-width="1.3"/>
<line x1="1582" y1="1168.5" x2="1582" y2="1202.2" stroke="#1a1a1a" stroke-width="1.3"/>
<line x1="1857.5" y1="1168.5" x2="1857.5" y2="1202.2" stroke="#1a1a1a" stroke-width="1.3"/>
<line x1="1559.8" y1="1202.2" x2="1559.8" y2="1219" stroke="#1a1a1a" stroke-width="1.3"/>
<line x1="1778.4" y1="1202.2" x2="1778.4" y2="1219" stroke="#1a1a1a" stroke-width="1.3"/>
<text x="1365.5" y="1077.9" font-size="8.1" fill="#000000" font-family="Liberation Sans" textLength="47.1" lengthAdjust="spacingAndGlyphs">APPROVALS</text>
<text x="1453.4" y="1077.9" font-size="8.1" fill="#000000" font-family="Liberation Sans" textLength="19.9" lengthAdjust="spacingAndGlyphs">DATE</text>
<text x="1331.8" y="1092.8" font-size="8.1" fill="#000000" font-family="Liberation Sans" textLength="19.3" lengthAdjust="spacingAndGlyphs">ENG:</text>
<text x="1331.8" y="1109.9" font-size="8.1" fill="#000000" font-family="Liberation Sans" textLength="18.4" lengthAdjust="spacingAndGlyphs">DSN:</text>
<text x="1331.8" y="1126.9" font-size="8.1" fill="#000000" font-family="Liberation Sans" textLength="18.6" lengthAdjust="spacingAndGlyphs">CHK:</text>
<text x="1363.8" y="1100" font-size="4.5" fill="#000000" font-family="Liberation Sans">*</text>
<text x="1363.8" y="1117.3" font-size="4.5" fill="#000000" font-family="Liberation Sans">*</text>
<text x="1363.8" y="1133" font-size="4.5" fill="#000000" font-family="Liberation Sans">*</text>
<text x="1447.9" y="1098.8" font-size="7" fill="#8a8a8a" font-family="Liberation Sans" textLength="19.9" lengthAdjust="spacingAndGlyphs">--/--/--</text>
<text x="1447.9" y="1115.8" font-size="7" fill="#8a8a8a" font-family="Liberation Sans" textLength="19.9" lengthAdjust="spacingAndGlyphs">--/--/--</text>
<text x="1447.9" y="1132.8" font-size="7" fill="#8a8a8a" font-family="Liberation Sans" textLength="19.9" lengthAdjust="spacingAndGlyphs">--/--/--</text>
<text x="1356.6" y="1148" font-size="8.1" fill="#000000" font-family="Liberation Sans" textLength="101.2" lengthAdjust="spacingAndGlyphs">REFERENCE DOCUMENTS</text>
<text x="1331.8" y="1161.1" font-size="8.1" fill="#000000" font-family="Liberation Sans" textLength="20.1" lengthAdjust="spacingAndGlyphs">BOM:</text>
<text x="1333.3" y="1177.9" font-size="8.1" fill="#000000" font-family="Liberation Sans" textLength="44" lengthAdjust="spacingAndGlyphs">ASSY DWG:</text>
<text x="1331.8" y="1194.7" font-size="8.1" fill="#000000" font-family="Liberation Sans" textLength="38.4" lengthAdjust="spacingAndGlyphs">FAB DWG:</text>
<text x="1331.8" y="1210.8" font-size="8.1" fill="#000000" font-family="Liberation Sans" textLength="39.5" lengthAdjust="spacingAndGlyphs">PCB DWG:</text>
<text x="1490.6" y="1072" font-size="8.1" fill="#000000" font-family="Liberation Sans" textLength="36.1" lengthAdjust="spacingAndGlyphs">PROJECT</text>
<text x="1492.4" y="1090.4" font-size="10" fill="#000000" font-family="Liberation Sans">*</text>
<text x="1489.1" y="1115.9" font-size="8.1" fill="#000000" font-family="Liberation Sans" textLength="78" lengthAdjust="spacingAndGlyphs">PROJECT REVISION:</text>
<text x="1490.6" y="1132.8" font-size="8.1" fill="#000000" font-family="Liberation Sans" textLength="20.8" lengthAdjust="spacingAndGlyphs">TITLE</text>
<text x="1518.4" y="1154.6" font-size="19" fill="#000000" font-family="Liberation Sans">*</text>
<text x="1495.7" y="1177.9" font-size="8.1" fill="#000000" font-family="Liberation Sans" textLength="17.3" lengthAdjust="spacingAndGlyphs">SIZE</text>
<text x="1498.4" y="1198.3" font-size="19.7" fill="#000000" font-family="Liberation Sans" textLength="10.8" lengthAdjust="spacingAndGlyphs">B</text>
<text x="1522.7" y="1177.9" font-size="8.1" fill="#000000" font-family="Liberation Sans" textLength="47.1" lengthAdjust="spacingAndGlyphs">CAGE CODE</text>
<text x="1584.7" y="1177.9" font-size="8.1" fill="#000000" font-family="Liberation Sans" textLength="35.2" lengthAdjust="spacingAndGlyphs">DWG NO.</text>
<text x="1865.7" y="1177.9" font-size="8.1" fill="#000000" font-family="Liberation Sans" textLength="15.8" lengthAdjust="spacingAndGlyphs">REV</text>
<text x="1870.9" y="1192.8" font-size="11" fill="#000000" font-family="Liberation Sans">ItemRevision</text>
<text x="1489.1" y="1210.8" font-size="8.1" fill="#000000" font-family="Liberation Sans" textLength="27.8" lengthAdjust="spacingAndGlyphs">SCALE:</text>
<text x="1562.1" y="1210.8" font-size="8.1" fill="#000000" font-family="Liberation Sans" textLength="41.1" lengthAdjust="spacingAndGlyphs">FILE NAME</text>
<text x="1608.2" y="1216.4" font-size="11" fill="#000000" font-family="Liberation Sans" textLength="66.5" lengthAdjust="spacingAndGlyphs">Main.SchDoc</text>
<text x="1781.1" y="1210.8" font-size="8.1" fill="#000000" font-family="Liberation Sans" textLength="25.8" lengthAdjust="spacingAndGlyphs">SHEET</text>
<text x="1846.4" y="1210.8" font-size="8.1" fill="#000000" font-family="Liberation Sans" textLength="10.6" lengthAdjust="spacingAndGlyphs">OF</text>
<text x="1819.4" y="1216.4" font-size="11" fill="#000000" font-family="Liberation Sans">1</text>
<text x="1862.8" y="1216.4" font-size="11" fill="#000000" font-family="Liberation Sans">6</text>
<text x="1612.7" y="1115.2" font-size="8.1" fill="#000000" font-family="Liberation Sans" textLength="86.3" lengthAdjust="spacingAndGlyphs">DOCUMENT REVISION:</text>
<text x="1736.7" y="1115.2" font-size="8.1" fill="#000000" font-family="Liberation Sans" textLength="52.1" lengthAdjust="spacingAndGlyphs">DESIGN ITEM:</text>
<text x="1568" y="1122.6" font-size="11" fill="#000000" font-family="Liberation Sans">7d2b0f6e7d14fbbcb969b5caf0662b6924435899</text>
<text x="1699" y="1122.6" font-size="11" fill="#000000" font-family="Liberation Sans">cef0760e7a092941a3d0c8e0a01b084c</text>
<text x="1791" y="1122.6" font-size="11" fill="#000000" font-family="Liberation Sans" textLength="99.5" lengthAdjust="spacingAndGlyphs">8d3b9ad0fc084ca9e</text>
<text x="1890.6" y="1122.6" font-size="11" fill="#000000" font-family="Liberation Sans">9b2f0c</text>
<text x="1813.6" y="1068.8" font-size="4.5" fill="#000000" font-family="Liberation Sans">*</text>
<text x="1813.6" y="1081" font-size="4.5" fill="#000000" font-family="Liberation Sans">*</text>
<text x="1813.6" y="1093" font-size="4.5" fill="#000000" font-family="Liberation Sans">*</text>
<text x="1813.6" y="1103" font-size="4.5" fill="#000000" font-family="Liberation Sans">*</text>
<rect x="1573.9" y="1062.6" width="180.2" height="43.2" fill="#ffffff"/>
<path d="M1574.7 1102.9 L1587 1102.9 L1590.1 1096.7 L1599.6 1096.7 L1599 1102.9 L1611.8 1102.9 L1610.3 1064.3 L1603.5 1064.3 L1600 1064.9 L1597.2 1066.4 L1594.6 1068.3 L1592.5 1070.6Z M1593.8 1088.9 L1600.3 1088.9 L1600.9 1073.7Z M1614.2 1102.9 L1625.2 1102.9 L1634.9 1064.3 L1624.1 1064.3Z M1639.8 1065.3 L1650.8 1065.3 L1648.7 1073.7 L1652.9 1073.7 L1651.3 1080.5 L1646.9 1080.5 L1643.2 1096.7 L1646.9 1097 L1645.6 1102.9 L1641.5 1103.5 L1638 1103.5 L1634.6 1102.8 L1632.8 1101.4 L1631.9 1099.6 L1632 1097.7Z M1650 1102.9 L1661 1102.9 L1667.8 1073.7 L1657.1 1073.7Z M1673.1 1073.7 L1684.1 1073.7 L1679.1 1094.1 L1679.4 1096 L1680.6 1096.9 L1682.2 1096.6 L1684.2 1094.8 L1690.3 1073.7 L1701.3 1073.7 L1694 1102.9 L1683 1102.9 L1683.3 1100.8 L1681.2 1102.2 L1679 1102.9 L1675 1103.4 L1672 1103.3 L1669.6 1102.6 L1668.1 1101.2 L1667.2 1098.5Z M1707.1 1073.7 L1717 1073.7 L1717 1076.6 L1719.6 1074.6 L1722.8 1073.4 L1727 1073.2 L1729.6 1073.5 L1731.8 1074.6 L1733.2 1076.3 L1736 1074.4 L1739.5 1073.4 L1743.5 1073.2 L1746.3 1073.5 L1748.9 1074.4 L1750.5 1075.8 L1751.2 1077.8 L1751 1080 L1745.3 1098.8 L1744.2 1101.2 L1742.6 1102.5 L1740 1102.9 L1734 1102.9 L1738.5 1084.2 L1738.5 1082.5 L1737.9 1081.5 L1736.6 1081 L1735.3 1081 L1733.9 1081.8 L1732.7 1083.1 L1727.5 1102.9 L1716.7 1102.9 L1721.7 1083.6 L1721.7 1082.2 L1721.2 1081.5 L1719.8 1081 L1718.1 1081 L1716.6 1081.8 L1715.4 1083.1 L1710.5 1102.9 L1699.7 1102.9Z" fill="#000" fill-rule="evenodd" stroke="#000" stroke-width="0.5" stroke-linejoin="round"/>
<text x="1748.4" y="1102.8" font-size="3.6" fill="#000000" font-family="Liberation Sans">TM</text>
</svg>
</body></html>
